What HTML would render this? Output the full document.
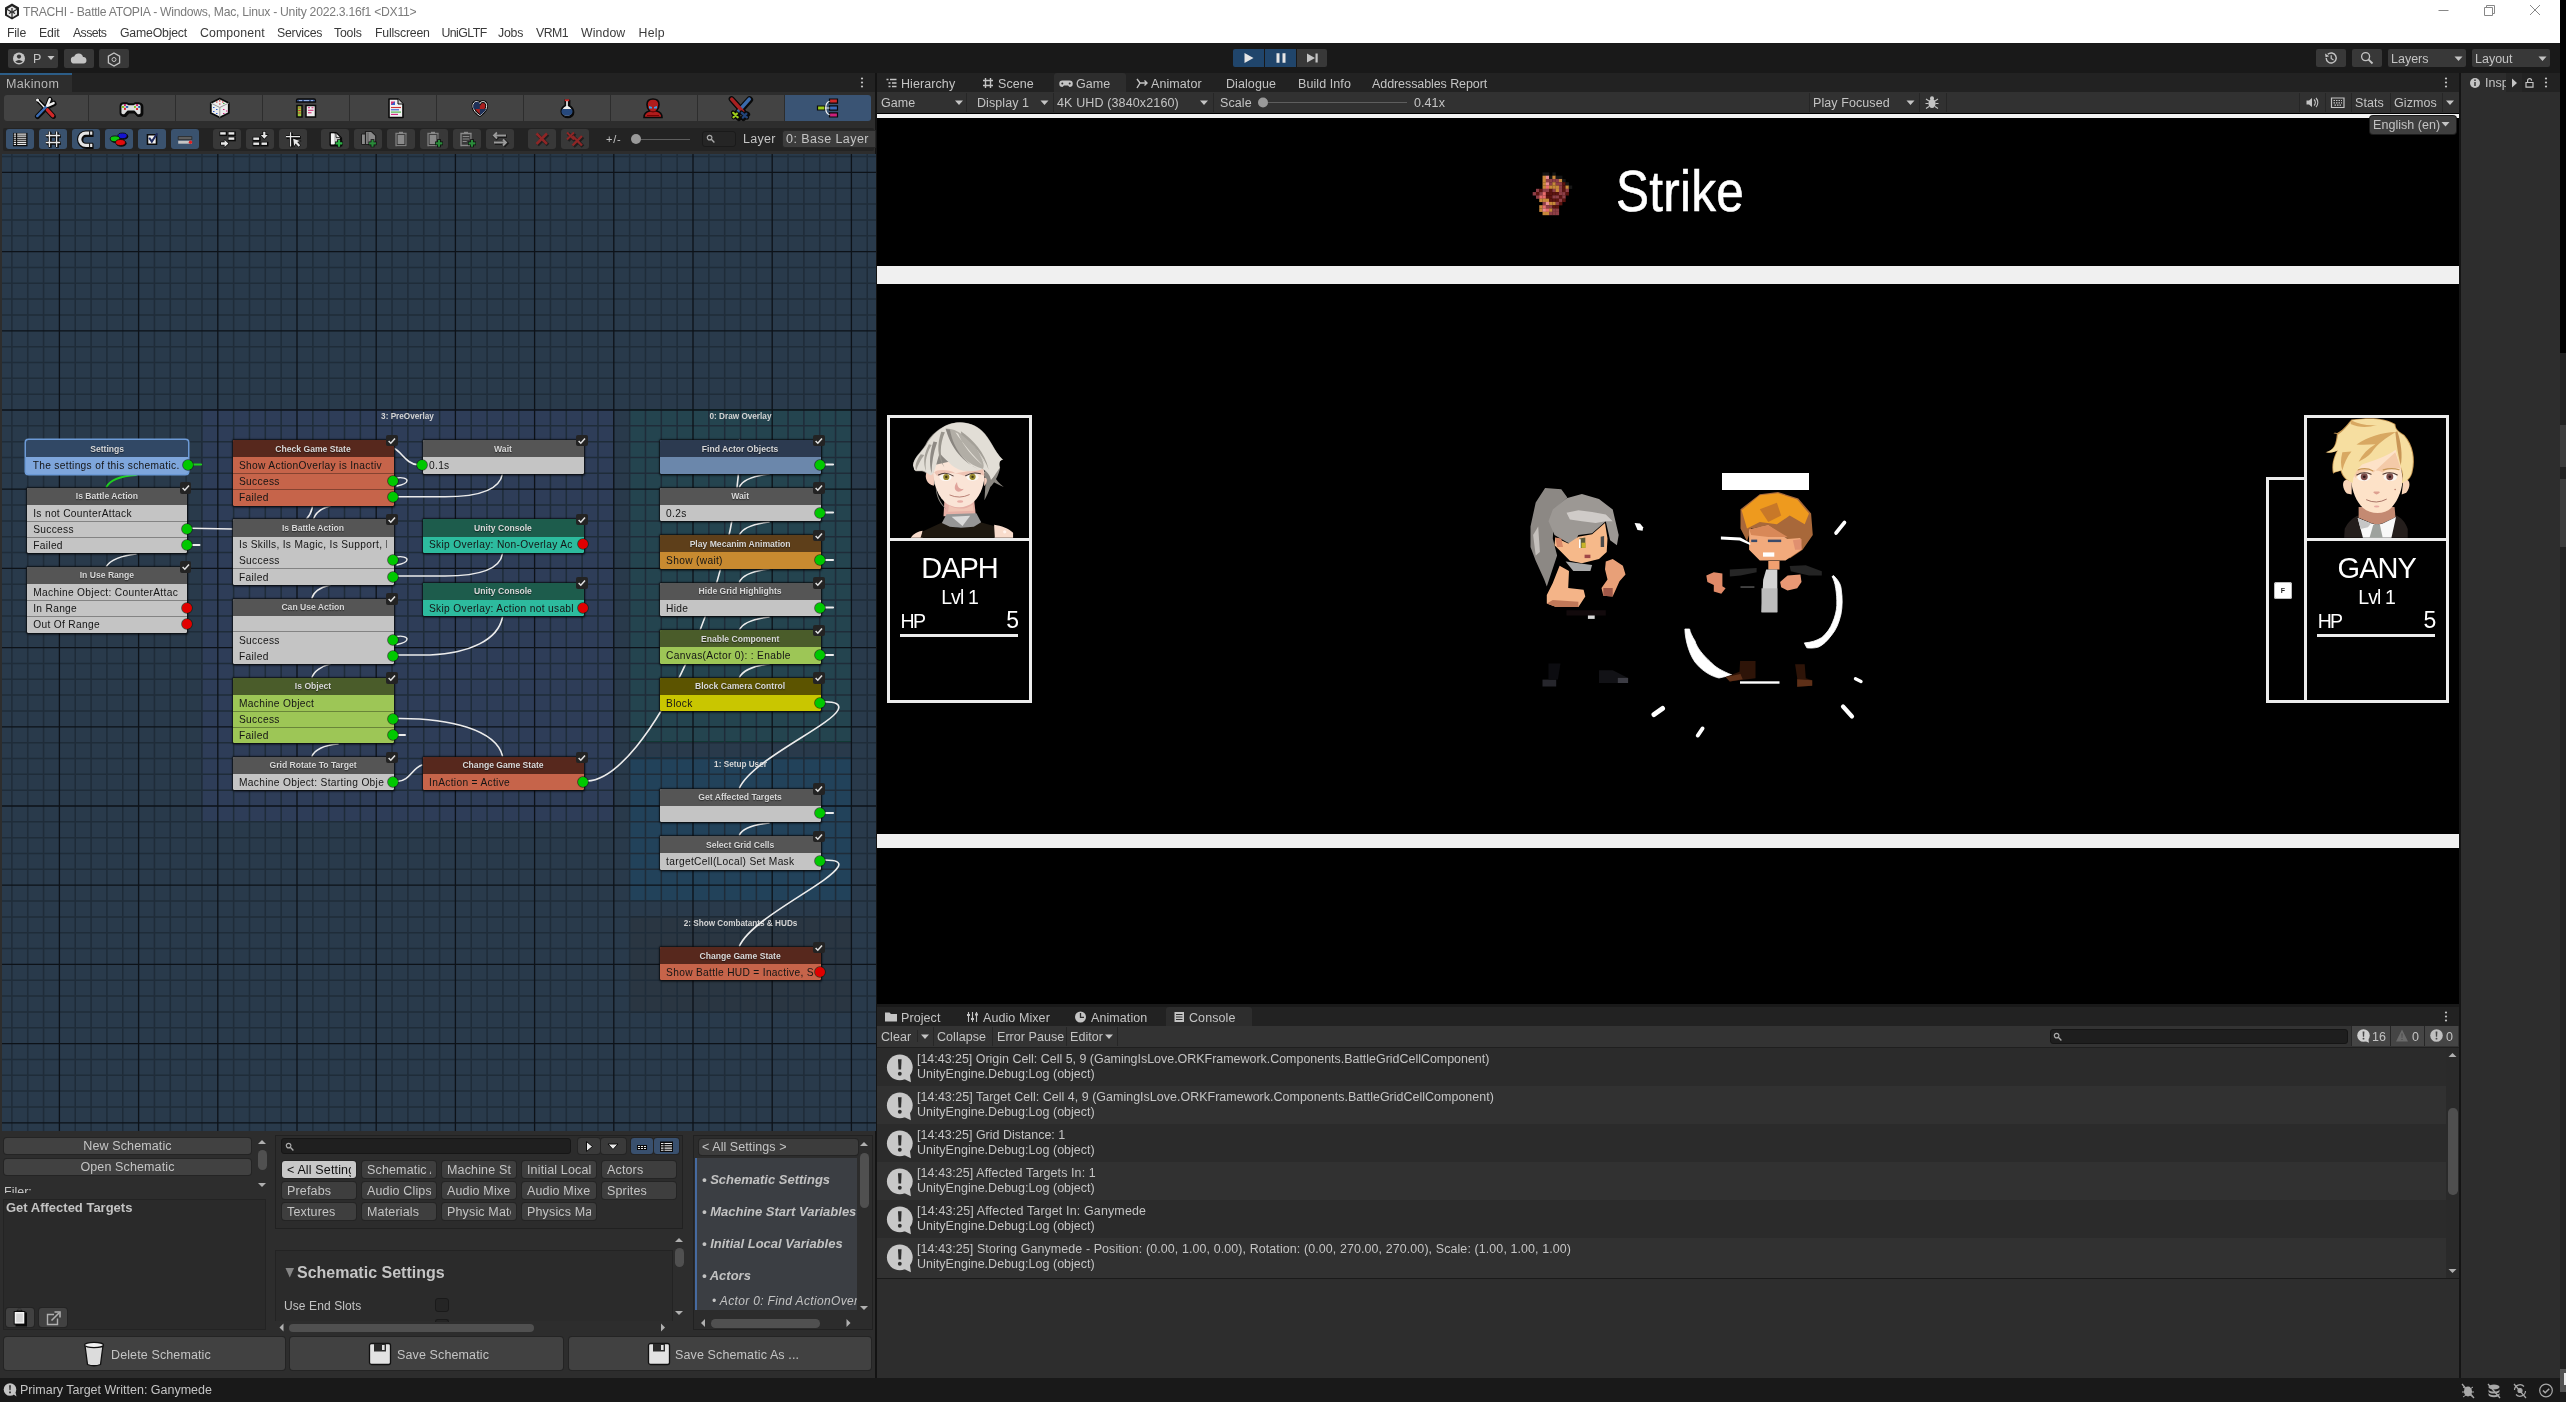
<!DOCTYPE html><html><head><meta charset="utf-8"><title>Unity</title><style>
*{box-sizing:border-box;margin:0;padding:0}
html,body{width:2566px;height:1402px;overflow:hidden;background:#1b1b1b}
body{font-family:"Liberation Sans",sans-serif;font-size:12.5px;color:#c4c4c4;position:relative}
.a{position:absolute}
.t{position:absolute;white-space:pre;line-height:1}
svg{position:absolute;overflow:visible}
.btn{position:absolute;background:#383838;border-radius:2px}
.sep{position:absolute;width:1px;background:#232323}
</style></head><body><div id="root" style="position:absolute;left:0;top:0;width:2566px;height:1402px;will-change:transform">
<div class="a" style="left:2560px;top:0px;width:6px;height:1402px;background:#000;"></div>
<div class="a" style="left:2560px;top:353px;width:6px;height:72px;background:#222;"></div>
<div class="a" style="left:2560px;top:425px;width:6px;height:42px;background:#3c3c3c;"></div>
<div class="a" style="left:2560px;top:467px;width:6px;height:12px;background:#222;"></div>
<div class="a" style="left:2560px;top:479px;width:6px;height:68px;background:#3c3c3c;"></div>
<div class="a" style="left:2560px;top:547px;width:6px;height:822px;background:#222;"></div>
<div class="a" style="left:2560px;top:1369px;width:6px;height:23px;background:#525252;"></div>
<div class="a" style="left:2563.5px;top:1373px;width:2.5px;height:12px;background:#e8e8e8;"></div>
<div class="a" style="left:2560px;top:1392px;width:6px;height:10px;background:#1b1b1b;"></div>
<div class="a" style="left:0px;top:0px;width:2560px;height:43px;background:#fff;"></div>
<svg style="left:4px;top:3px" width="16" height="17" viewBox="0 0 16 17"><path d="M8 0.5 L15 4.5 V12.5 L8 16.5 L1 12.5 V4.5 Z" fill="#222"/><path d="M8 3.2 L12.6 5.9 L8 8.6 L3.4 5.9 Z M3 7 L7.4 9.6 V14.2 L3 11.6 Z M13 7 L8.6 9.6 V14.2 L13 11.6 Z" fill="#e8e8e8"/><path d="M8 5 v3.5 M5 10.5 l2.4-1.3 M11 10.5 l-2.4-1.3" stroke="#222" stroke-width="1.2"/></svg>
<div class="t" style="left:23px;top:5.9px;font-size:12.2px;color:#7b7b7b;letter-spacing:-0.27px">TRACHI - Battle ATOPIA - Windows, Mac, Linux - Unity 2022.3.16f1 &lt;DX11&gt;</div>
<div class="t" style="left:7px;top:27.3px;font-size:12.3px;color:#3a3a3a;letter-spacing:-0.2px">File</div>
<div class="t" style="left:39px;top:27.3px;font-size:12.3px;color:#3a3a3a;letter-spacing:-0.2px">Edit</div>
<div class="t" style="left:73px;top:27.3px;font-size:12.3px;color:#3a3a3a;letter-spacing:-0.6px">Assets</div>
<div class="t" style="left:120px;top:27.3px;font-size:12.3px;color:#3a3a3a;letter-spacing:-0.2px">GameObject</div>
<div class="t" style="left:200px;top:27.3px;font-size:12.3px;color:#3a3a3a;letter-spacing:0.13px">Component</div>
<div class="t" style="left:277px;top:27.3px;font-size:12.3px;color:#3a3a3a;letter-spacing:-0.25px">Services</div>
<div class="t" style="left:334px;top:27.3px;font-size:12.3px;color:#3a3a3a;letter-spacing:-0.2px">Tools</div>
<div class="t" style="left:375px;top:27.3px;font-size:12.3px;color:#3a3a3a;letter-spacing:-0.2px">Fullscreen</div>
<div class="t" style="left:441.5px;top:27.3px;font-size:12.3px;color:#3a3a3a;letter-spacing:-0.55px">UniGLTF</div>
<div class="t" style="left:498px;top:27.3px;font-size:12.3px;color:#3a3a3a;letter-spacing:-0.2px">Jobs</div>
<div class="t" style="left:536px;top:27.3px;font-size:12.3px;color:#3a3a3a;letter-spacing:-0.5px">VRM1</div>
<div class="t" style="left:581px;top:27.3px;font-size:12.3px;color:#3a3a3a;letter-spacing:0.1px">Window</div>
<div class="t" style="left:638.5px;top:27.3px;font-size:12.3px;color:#3a3a3a;letter-spacing:0.3px">Help</div>
<svg style="left:2430px;top:0" width="130" height="22"><path d="M8.5 10.5h10" stroke="#888" stroke-width="1" fill="none"/><path d="M54.5 7.5h8v8h-8z M56.5 7.5v-2h8v8h-2" stroke="#888" stroke-width="1" fill="none"/><path d="M100 5l10 10M110 5l-10 10" stroke="#888" stroke-width="1" fill="none"/></svg>
<div class="a" style="left:0px;top:43px;width:2560px;height:30px;background:#191919;"></div>
<div class="a" style="left:8px;top:49px;width:50px;height:19px;background:#383838;border-radius:2px"></div>
<div class="a" style="left:64px;top:49px;width:30px;height:19px;background:#383838;border-radius:2px"></div>
<div class="a" style="left:99px;top:49px;width:30px;height:19px;background:#383838;border-radius:2px"></div>
<svg style="left:12px;top:51px" width="44" height="15"><circle cx="7" cy="7.5" r="6" fill="#c4c4c4"/><circle cx="7" cy="5.6" r="2.1" fill="#383838"/><path d="M3.2 10.6 Q7 7.2 10.8 10.6 Q7 13.6 3.2 10.6Z" fill="#383838"/><path d="M35.5 5 h7 l-3.5 4z" fill="#c4c4c4"/></svg>
<div class="t" style="left:33px;top:52.8px;font-size:12.5px;color:#c4c4c4;">P</div>
<svg style="left:70px;top:52px" width="18" height="12"><path d="M4.5 11.5 a3.5 3.5 0 0 1 -0.3 -7 a4.6 4.6 0 0 1 8.8 0.6 a3.2 3.2 0 0 1 0.5 6.4z" fill="#c4c4c4"/></svg>
<svg style="left:107px;top:51.5px" width="14" height="15"><path d="M7 1 L12.6 4.2 V10.8 L7 14 L1.4 10.8 V4.2 Z" fill="none" stroke="#c4c4c4" stroke-width="1.3"/><circle cx="7" cy="7.5" r="2" fill="none" stroke="#c4c4c4" stroke-width="1"/></svg>
<div class="a" style="left:1233px;top:49px;width:31px;height:18px;background:#20456b;border-radius:2px 0 0 2px"></div>
<div class="a" style="left:1265px;top:49px;width:31px;height:18px;background:#20456b;"></div>
<div class="a" style="left:1297px;top:49px;width:30px;height:18px;background:#383838;border-radius:0 2px 2px 0"></div>
<svg style="left:1233px;top:49px" width="94" height="18"><path d="M11.5 4 L20.5 9 L11.5 14Z" fill="#e6e6e6"/><path d="M43.5 4.2h3v9.6h-3z M49.5 4.2h3v9.6h-3z" fill="#e6e6e6"/><path d="M74 4.5 L82 9 L74 13.5Z M82.5 4.5h2.2v9h-2.2z" fill="#c4c4c4"/></svg>
<div class="a" style="left:2316px;top:49px;width:30px;height:18px;background:#383838;border-radius:2px"></div>
<div class="a" style="left:2352px;top:49px;width:30px;height:18px;background:#383838;border-radius:2px"></div>
<div class="a" style="left:2388px;top:49px;width:78px;height:18px;background:#383838;border-radius:2px"></div>
<div class="a" style="left:2472px;top:49px;width:78px;height:18px;background:#383838;border-radius:2px"></div>
<svg style="left:2324px;top:51px" width="14" height="14"><path d="M2.2 7 a5 5 0 1 0 1.6 -3.7" fill="none" stroke="#c4c4c4" stroke-width="1.4"/><path d="M1 2.5 l0.6 3.8 l3.6 -1z" fill="#c4c4c4"/><path d="M7.2 4.2 v3.3 l2.3 1.4" fill="none" stroke="#c4c4c4" stroke-width="1.2"/></svg>
<svg style="left:2360px;top:51px" width="14" height="14"><circle cx="5.6" cy="5.6" r="4" fill="none" stroke="#c4c4c4" stroke-width="1.3"/><path d="M8.6 8.6 L12.5 12.5" stroke="#c4c4c4" stroke-width="1.8"/></svg>
<div class="t" style="left:2391px;top:52.8px;font-size:12.5px;color:#c4c4c4;">Layers</div>
<div class="t" style="left:2475px;top:52.8px;font-size:12.5px;color:#c4c4c4;">Layout</div>
<svg style="left:2454px;top:56px" width="96" height="6"><path d="M0.5 0.5h8l-4 4.5z M84.5 0.5h8l-4 4.5z" fill="#c4c4c4"/></svg>
<div class="a" style="left:0px;top:73px;width:876px;height:1305px;background:#2d2d2d;"></div>
<div class="a" style="left:0px;top:73px;width:876px;height:19px;background:#222;"></div>
<div class="a" style="left:0px;top:73px;width:72px;height:19px;background:#2d2d2d;"></div>
<div class="a" style="left:0px;top:73px;width:72px;height:2px;background:#2c5d87;"></div>
<div class="t" style="left:6px;top:77.8px;font-size:12.5px;color:#b8b8b8;letter-spacing:0.35px">Makinom</div>
<svg style="left:860px;top:77px" width="4" height="12"><circle cx="2" cy="1.5" r="1.1" fill="#c4c4c4"/><circle cx="2" cy="5.5" r="1.1" fill="#c4c4c4"/><circle cx="2" cy="9.5" r="1.1" fill="#c4c4c4"/></svg>
<div class="a" style="left:875px;top:73px;width:2px;height:1305px;background:#131313;"></div>
<div class="a" style="left:877px;top:73px;width:1582px;height:19px;background:#222;"></div>
<div class="a" style="left:1054px;top:73px;width:72px;height:19px;background:#2d2d2d;border-radius:3px 3px 0 0"></div>
<div class="a" style="left:877px;top:92px;width:1582px;height:21px;background:#313131;"></div>
<div class="a" style="left:2459px;top:73px;width:2px;height:1305px;background:#141414;"></div>
<div class="a" style="left:2461px;top:73px;width:99px;height:1305px;background:#2d2d2d;"></div>
<div class="a" style="left:2461px;top:73px;width:99px;height:19px;background:#2d2d2d;border-radius:3px 3px 0 0"></div>
<div class="a" style="left:2506px;top:73px;width:54px;height:19px;background:#262626;"></div>
<div class="a" style="left:2522px;top:73px;width:38px;height:19px;background:#222;"></div>
<svg style="left:2468px;top:76px" width="90" height="14"><circle cx="7" cy="7" r="5" fill="#c4c4c4"/><path d="M6.3 6h1.4v4h-1.4z M6.3 3.6h1.4v1.4h-1.4z" fill="#2d2d2d"/><path d="M44 2.5l5 4.5l-5 4.5z" fill="#c4c4c4"/><path d="M58 6.5h7v4.6h-7z" fill="none" stroke="#c4c4c4" stroke-width="1.2"/><path d="M59.6 6.3v-1.6a2 2 0 0 1 4 0" fill="none" stroke="#c4c4c4" stroke-width="1.2"/><circle cx="78" cy="2.5" r="1.1" fill="#c4c4c4"/><circle cx="78" cy="6.5" r="1.1" fill="#c4c4c4"/><circle cx="78" cy="10.5" r="1.1" fill="#c4c4c4"/></svg>
<div class="t" style="left:2485px;top:77px;font-size:12.5px;color:#c4c4c4;width:21px;overflow:hidden">Insp</div>
<div class="a" style="left:0px;top:1378px;width:2560px;height:24px;background:#191919;"></div>
<svg style="left:2px;top:1382px" width="16" height="16"><circle cx="8" cy="7.5" r="6.3" fill="#c4c4c4"/><path d="M11 12 l3.5 2.5 l-1 -4z" fill="#c4c4c4"/><path d="M7.2 3.3h1.6l-0.3 5h-1z M7.2 9.6h1.6v1.6h-1.6z" fill="#191919"/></svg>
<div class="t" style="left:20px;top:1384.2px;font-size:12.5px;color:#c4c4c4;">Primary Target Written: Ganymede</div>
<svg style="left:2456px;top:1381px" width="104" height="18"><g fill="#a8a8a8" stroke="none"><ellipse cx="12" cy="10.5" rx="4" ry="5"/><path d="M7 6l3 2M17 6l-3 2M6 11h3M18 11h-3M7 16l3-2M17 16l-3-2" stroke="#a8a8a8" stroke-width="1"/><path d="M6 3l12 14" stroke="#a8a8a8" stroke-width="1.3"/></g><g fill="#a8a8a8"><ellipse cx="38" cy="6" rx="5.5" ry="2.4"/><path d="M32.5 8.2a5.5 2.4 0 0 0 11 0v2a5.5 2.4 0 0 1-11 0z M32.5 11.8a5.5 2.4 0 0 0 11 0v2a5.5 2.4 0 0 1-11 0z"/><path d="M32 3l12 14" stroke="#a8a8a8" stroke-width="1.3"/></g><g fill="none" stroke="#a8a8a8" stroke-width="1.2"><path d="M58.5 9a5.5 5.5 0 0 1 9.5-3.5M69.5 10a5.5 5.5 0 0 1-9.5 3.5"/><circle cx="64" cy="9.5" r="2" fill="#a8a8a8"/><path d="M58 3l12 14"/></g><g fill="none" stroke="#a8a8a8" stroke-width="1.2"><circle cx="90" cy="9.5" r="6.3"/><path d="M87 9.5l2.2 2.2l4-4" stroke-width="1.6"/></g></svg>
<div class="a" style="left:4px;top:95px;width:84px;height:26px;background:#434343;border-radius:3px 0 0 3px"></div>
<div class="a" style="left:89px;top:95px;width:86px;height:26px;background:#434343;"></div>
<div class="a" style="left:176px;top:95px;width:86px;height:26px;background:#434343;"></div>
<div class="a" style="left:263px;top:95px;width:86px;height:26px;background:#434343;"></div>
<div class="a" style="left:350px;top:95px;width:86px;height:26px;background:#434343;"></div>
<div class="a" style="left:437px;top:95px;width:86px;height:26px;background:#434343;"></div>
<div class="a" style="left:524px;top:95px;width:86px;height:26px;background:#434343;"></div>
<div class="a" style="left:611px;top:95px;width:86px;height:26px;background:#434343;"></div>
<div class="a" style="left:698px;top:95px;width:86px;height:26px;background:#434343;"></div>
<div class="a" style="left:785px;top:95px;width:86px;height:26px;background:#3a5474;border-radius:0 3px 3px 0"></div>
<div class="a" style="left:3px;top:128px;width:871px;height:23px;background:#232323;border-radius:2px"></div>
<div class="a" style="left:6px;top:129px;width:28px;height:20px;background:#3a526e;border-radius:3px"></div>
<div class="a" style="left:39px;top:129px;width:28px;height:20px;background:#3a526e;border-radius:3px"></div>
<div class="a" style="left:72px;top:129px;width:28px;height:20px;background:#3a526e;border-radius:3px"></div>
<div class="a" style="left:105px;top:129px;width:28px;height:20px;background:#3a526e;border-radius:3px"></div>
<div class="a" style="left:138px;top:129px;width:28px;height:20px;background:#3a526e;border-radius:3px"></div>
<div class="a" style="left:171px;top:129px;width:28px;height:20px;background:#3a526e;border-radius:3px"></div>
<div class="a" style="left:213px;top:129px;width:28px;height:20px;background:#383838;border-radius:3px"></div>
<div class="a" style="left:246px;top:129px;width:28px;height:20px;background:#383838;border-radius:3px"></div>
<div class="a" style="left:279px;top:129px;width:28px;height:20px;background:#383838;border-radius:3px"></div>
<div class="a" style="left:321px;top:129px;width:28px;height:20px;background:#383838;border-radius:3px"></div>
<div class="a" style="left:354px;top:129px;width:28px;height:20px;background:#383838;border-radius:3px"></div>
<div class="a" style="left:387px;top:129px;width:28px;height:20px;background:#383838;border-radius:3px"></div>
<div class="a" style="left:420px;top:129px;width:28px;height:20px;background:#383838;border-radius:3px"></div>
<div class="a" style="left:453px;top:129px;width:28px;height:20px;background:#383838;border-radius:3px"></div>
<div class="a" style="left:486px;top:129px;width:28px;height:20px;background:#383838;border-radius:3px"></div>
<div class="a" style="left:528px;top:129px;width:28px;height:20px;background:#383838;border-radius:3px"></div>
<div class="a" style="left:561px;top:129px;width:28px;height:20px;background:#383838;border-radius:3px"></div>
<svg style="left:0;top:0" width="1" height="1"><g stroke-linecap="round" stroke-linejoin="round"><g transform="translate(0.9,0.9)"><path d="M37.500 100 L53 116M36.800 116.300 L47.500 105.500L49.800 99M48.500 105.500L53.800 103" stroke="#0a0a0a" stroke-width="4" fill="none"/></g><path d="M37.500 100 L44 107" stroke="#0a0a0a" stroke-width="3.600"/><path d="M47.300 109.700 L52.800 115.800" stroke="#0a0a0a" stroke-width="5.400"/><path d="M37 116.300 L47.500 105.500" stroke="#0a0a0a" stroke-width="4.400"/><path d="M47.500 105.300L49.800 99M48.500 105.300L53.800 103" stroke="#0a0a0a" stroke-width="4.600" fill="none"/><path d="M37.600 100.100 L44.500 107.500" stroke="#f4f4f4" stroke-width="1.300"/><circle cx="37.500" cy="100" r="1.500" fill="#f4f4f4"/><path d="M47.400 109.800 L52.700 115.700" stroke="#d02828" stroke-width="3.400"/><path d="M37.200 116.100 L47 106" stroke="#3a6cb4" stroke-width="2.400"/><path d="M47.200 105.800L49.800 99.200M48 105.600L53.600 103.100" stroke="#f0f0f0" stroke-width="2.400" fill="none"/></g><path d="M123.500 103.200h3.500l1.500 1h5l1.500-1h3.500a3 3 0 0 1 3 3v6.500a2.400 2.400 0 0 1-2.400 2.400h-1.800l-3.300-3.600h-6l-3.300 3.600h-1.800a2.400 2.400 0 0 1-2.400-2.400v-6.500a3 3 0 0 1 3-3z" transform="translate(0.9,0.9)" fill="#0a0a0a" stroke="#0a0a0a" stroke-width="2"/><path d="M123.500 103.200h3.500l1.500 1h5l1.500-1h3.500a3 3 0 0 1 3 3v6.500a2.400 2.400 0 0 1-2.400 2.400h-1.800l-3.300-3.600h-6l-3.300 3.600h-1.800a2.400 2.400 0 0 1-2.400-2.400v-6.500a3 3 0 0 1 3-3z" fill="#dedede" stroke="#0a0a0a" stroke-width="1.900" stroke-linejoin="round"/><rect x="124" y="104.100" width="1.900" height="1.900" fill="#c8206a"/><rect x="121.900" y="106" width="2.400" height="1.900" fill="#80c020"/><rect x="125.800" y="106" width="2.400" height="1.900" fill="#2860b0"/><rect x="124" y="107.900" width="1.900" height="2" fill="#d82020"/><rect x="136.100" y="104.100" width="1.900" height="1.900" fill="#c8206a"/><rect x="134" y="106" width="1.900" height="1.900" fill="#80c020"/><rect x="138.200" y="106" width="1.900" height="1.900" fill="#2860b0"/><rect x="136.100" y="108.100" width="1.900" height="1.900" fill="#d82020"/><path d="M219.800 98.500l9 4.500v10l-9 4.500l-9-4.500v-10z" fill="#ececec" stroke="#0a0a0a" stroke-width="1.800" stroke-linejoin="round"/><path d="M210.800 103l9 4.500l9-4.500M219.800 107.500v10" stroke="#9a9a9a" stroke-width="1" fill="none"/><path d="M216 102h1.500M219 100.800h1.500M222 102h1.500M219 104h1.500" stroke="#d03030" stroke-width="1.200"/><path d="M223 103.500h1.500" stroke="#40b040" stroke-width="1.200"/><path d="M213 107.500h1.500M216 109.500h1.500M213 111.500h1.500M216 113.500h1.500" stroke="#3060d0" stroke-width="1.200"/><path d="M223 109.500h1.500M226 111h1.500M223 113.500h1.500" stroke="#d02080" stroke-width="1.200"/><path d="M298 99h16a1.500 1.500 0 0 1 1.500 1.500v1.500h-19v-1.500a1.500 1.500 0 0 1 1.500-1.500z" fill="#3a5a9a" stroke="#0a0a0a" stroke-width="1.300"/><path d="M299 100.600h3M304 100.600h5M311 100.600h2" stroke="#9ab8e8" stroke-width="1"/><path d="M297 105.500h5v11.500h-5z" fill="#98c840" stroke="#0a0a0a" stroke-width="1.500"/><path d="M298.300 108h2.400M298.300 110.500h2.400M298.300 113h2.400" stroke="#d03030" stroke-width="1.100"/><path d="M306 105.500h9.500v11.500h-9.500z" fill="#ececec" stroke="#0a0a0a" stroke-width="1.500"/><path d="M308 107.800h2M311.500 107.800h2M308 110.300h5.500M308 112.800h3.500" stroke="#d02070" stroke-width="1.100"/><path d="M389 99h9l5 5v13.500h-14z" fill="#f0f0f0" stroke="#0a0a0a" stroke-width="1.600" stroke-linejoin="round"/><path d="M398 99v5h5" fill="#c8c8c8" stroke="#0a0a0a" stroke-width="1"/><path d="M391 101.500h4v3.500h-4z" fill="#d03070"/><path d="M391 105l4-3.500v3.500z" fill="#3060d0"/><path d="M391 107.500h10" stroke="#d03030" stroke-width="1.100"/><path d="M391 109.800h8" stroke="#3060d0" stroke-width="1.100"/><path d="M391 112.100h10" stroke="#40b040" stroke-width="1.100"/><path d="M391 114.400h7" stroke="#d02080" stroke-width="1.100"/><g transform="translate(0,1.6)"><path d="M479.800 114c-10-6.500-7.500-14.800-2.500-14c1.500 0.300 2.500 1.500 2.500 2.500c0-1 1-2.200 2.500-2.500c5-0.800 7.500 7.500-2.500 14z" fill="#a82020" stroke="#0a0a0a" stroke-width="2.800" stroke-linejoin="round"/><path d="M479.800 114c-10-6.500-7.500-14.800-2.500-14c1.500 0.300 2.500 1.500 2.500 2.500c0-1 1-2.200 2.500-2.500c5-0.800 7.500 7.500-2.500 14z" fill="none" stroke="#f0f0f0" stroke-width="1"/><path d="M479.800 102.500v5h-6.300c-0.800-3.800 0.800-7.800 3.800-7.400c1.500 0.300 2.500 1.400 2.500 2.400z" fill="#1e3058"/><path d="M479.800 107.500h6.300c-1 2.300-3 4.300-6.300 6.300z" fill="#1e3058"/></g><path d="M565.300 100h3.400v5.500c2.600 1.300 4 3.600 4 6c0 3.200-2.600 5-5.700 5s-5.700-1.800-5.700-5c0-2.400 1.400-4.700 4-6z" transform="translate(0.8,0.8)" fill="#0a0a0a" stroke="#0a0a0a" stroke-width="1.800"/><path d="M565.300 100h3.400v5.500c2.600 1.300 4 3.600 4 6c0 3.200-2.600 5-5.700 5s-5.700-1.800-5.700-5c0-2.400 1.400-4.700 4-6z" fill="#ececec" stroke="#0a0a0a" stroke-width="1.700"/><path d="M562.500 109h9c0.800 0.800 1 1.700 1 2.500c0 2.800-2.400 4.200-5.500 4.200s-5.500-1.400-5.500-4.200c0-0.800 0.200-1.700 1-2.500z" fill="#26487c"/><path d="M564.800 99.300h4.400v1.900h-4.400z" fill="#d03030"/><path d="M644 117.500c0-4 3-6 5.500-6.500c-2-2-2.500-4.500-2.500-6.500c0-3.500 2.500-5.500 6-5.500s6 2 6 5.500c0 2-0.500 4.500-2.500 6.500c2.500 0.500 5.500 2.500 5.500 6.500z" fill="#b01c1c" stroke="#0a0a0a" stroke-width="1.600"/><path d="M649 106l3 1v1.500h-3z M657 106l-3 1v1.500h3z" fill="#3aa0e8"/><path d="M650.500 111c1.500 1.200 3.500 1.200 5 0" stroke="#500" stroke-width="1" fill="none"/><path d="M647 115.500h12" stroke="#700" stroke-width="1"/><g stroke-linecap="round"><g transform="translate(0.9,0.9)"><path d="M731.500 99l13 14.500M749.500 99l-13 14.500M733.500 113l4.500 4.500M746.500 113.500l-4 4" stroke="#0a0a0a" stroke-width="5.500"/></g><path d="M731.500 99l12.500 14" stroke="#0a0a0a" stroke-width="5.800"/><path d="M749.500 99l-12.500 14" stroke="#0a0a0a" stroke-width="5.800"/><path d="M749.300 99.200l-11 12.300" stroke="#3a6aac" stroke-width="3.500"/><path d="M731.700 99.200l11 12.300" stroke="#a82020" stroke-width="3.500"/><path d="M733 112.500l5 5M733.500 117.300l3.500-3.800" stroke="#0a0a0a" stroke-width="4.200"/><path d="M741.500 112.500l5.500 5M746.500 113.500l-3.500 4" stroke="#0a0a0a" stroke-width="4.200"/><path d="M733.200 112.800l4.500 4.500M733.500 117.300l3.400-3.700" stroke="#9ccc1c" stroke-width="2.200"/><path d="M741.800 112.800l5 4.500M746.300 113.800l-3.300 3.700" stroke="#22447a" stroke-width="2.400"/></g><path d="M817.500 106h7.500v4h-7.500z" fill="#9ccc1c" stroke="#0a0a0a" stroke-width="1.200"/><path d="M829.500 99h8v4.200h-8z" fill="#d02828" stroke="#0a0a0a" stroke-width="1.200"/><path d="M829.500 105.900h8v4.200h-8z" fill="#3a6ab8" stroke="#0a0a0a" stroke-width="1.200"/><path d="M829.500 112.800h8v4.200h-8z" fill="#cc207c" stroke="#0a0a0a" stroke-width="1.200"/><path d="M825 108h4.500M829.500 101.200c-2.800 1-3.800 4-3.800 6.800s1 5.800 3.800 6.800" stroke="#f0f0f0" stroke-width="1.200" fill="none"/><rect x="13" y="132.900" width="14.500" height="13.400" fill="#0a0a0a"/><path d="M13.8 134.10h2.2M17.2 134.10h9M13.8 136.15h2.2M17.2 136.15h9M13.8 138.20h2.2M17.2 138.20h9M13.8 140.25h2.2M17.2 140.25h9M13.8 142.30h2.2M17.2 142.30h9M13.8 144.35h2.2M17.2 144.35h9" stroke="#e8e8e8" stroke-width="1.150"/><path d="M49.400 131.600v15.400M56.600 131.600v15.400M45.800 135.500h14.400M45.800 142.500h14.400" transform="translate(0.8,0.8)" stroke="#0a0a0a" stroke-width="2.9000000000000004" fill="none" stroke-linejoin="round"/><path d="M49.400 131.600v15.400M56.600 131.600v15.400M45.800 135.500h14.400M45.800 142.500h14.400" stroke="#0a0a0a" stroke-width="2.9000000000000004" fill="none" stroke-linejoin="round"/><path d="M49.400 131.600v15.400M56.600 131.600v15.400M45.800 135.500h14.400M45.800 142.500h14.400" stroke="#e8e8e8" stroke-width="1.3" fill="none" stroke-linejoin="round"/><path d="M92.800 133.200h-7a6.100 6.100 0 0 0 0 12.200h7" transform="translate(0.8,0.9)" stroke="#0a0a0a" stroke-width="5.600" fill="none"/><path d="M93 133.200h-7.200a6.100 6.100 0 0 0 0 12.200h7.200" stroke="#0a0a0a" stroke-width="5.400" fill="none"/><path d="M92.300 133.200h-6.500a6.100 6.100 0 0 0 0 12.200h6.500" stroke="#e4e4e4" stroke-width="3.300" fill="none"/><path d="M89.600 131.200v4M89.600 143.400v4" stroke="#0a0a0a" stroke-width="1"/><g transform="translate(0.8,0.8)" fill="#0a0a0a"><ellipse cx="122.5" cy="135.800" rx="5" ry="3.200"/><ellipse cx="115" cy="138.800" rx="5.200" ry="3.300"/><ellipse cx="120.5" cy="142.500" rx="5.300" ry="3.400"/></g><ellipse cx="122.5" cy="135.800" rx="4.600" ry="2.800" fill="#1414d0" stroke="#0a0a0a" stroke-width="0.800"/><ellipse cx="115" cy="138.800" rx="4.800" ry="2.900" fill="#0cc80c" stroke="#0a0a0a" stroke-width="0.800"/><ellipse cx="120.5" cy="142.500" rx="4.900" ry="3" fill="#e00c0c" stroke="#0a0a0a" stroke-width="0.800"/><path d="M147.5 134.800h9v9.500h-9z" fill="#f0f0f0" stroke="#0a0a0a" stroke-width="1.600"/><path d="M149.2 137.800l2.600 3.800l5.500-8.300" stroke="#1e2a5e" stroke-width="2" fill="none"/><path d="M178.2 136.500h13.600v3.200h-13.600z" fill="#5e5e5e" stroke="#2a2a2a" stroke-width="0.800"/><path d="M178.2 140.700h13.600v3h-13.600z" fill="#c4c4c4"/><circle cx="190.5" cy="142.200" r="1.700" fill="#e02020"/><rect x="219.50" y="131.50" width="7.70" height="4.60" fill="#0a0a0a"/><rect x="220.20" y="132.20" width="5.50" height="2.40" fill="#e8e8e8"/><rect x="227.80" y="131.50" width="8.00" height="4.60" fill="#0a0a0a"/><rect x="228.50" y="132.20" width="5.80" height="2.40" fill="#e8e8e8"/><rect x="227.80" y="136.70" width="8.00" height="4.60" fill="#0a0a0a"/><rect x="228.50" y="137.40" width="5.80" height="2.40" fill="#e8e8e8"/><path d="M221 142.300h3.600v-2.200l3.800 3.400l-3.800 3.400v-2.200h-3.600z" fill="#e8e8e8" stroke="#0a0a0a" stroke-width="1.400" stroke-linejoin="round" paint-order="stroke"/><rect x="252.60" y="136.80" width="8.00" height="4.60" fill="#0a0a0a"/><rect x="253.30" y="137.50" width="5.80" height="2.40" fill="#e8e8e8"/><rect x="252.60" y="141.80" width="8.00" height="4.60" fill="#0a0a0a"/><rect x="253.30" y="142.50" width="5.80" height="2.40" fill="#e8e8e8"/><rect x="260.80" y="141.80" width="7.70" height="4.60" fill="#0a0a0a"/><rect x="261.50" y="142.50" width="5.50" height="2.40" fill="#e8e8e8"/><path d="M263.200 131.800h2.200v3.200h2.400l-3.500 3.700l-3.500-3.700h2.400z" fill="#e8e8e8" stroke="#0a0a0a" stroke-width="1.400" stroke-linejoin="round" paint-order="stroke"/><path d="M290.500 132.200v14.300M286 136.700h14" transform="translate(0.8,0.8)" stroke="#0a0a0a" stroke-width="2.9000000000000004" fill="none" stroke-linejoin="round"/><path d="M290.500 132.200v14.300M286 136.700h14" stroke="#0a0a0a" stroke-width="2.9000000000000004" fill="none" stroke-linejoin="round"/><path d="M290.500 132.200v14.300M286 136.700h14" stroke="#e8e8e8" stroke-width="1.3" fill="none" stroke-linejoin="round"/><path d="M293.200 138.700l6.800 2.300l-2.800 1l3 3.300l-1.600 1.400l-3-3.300l-1.400 2.600z" fill="#e8e8e8" stroke="#0a0a0a" stroke-width="1.200" paint-order="stroke"/><path d="M330.200 132.800h5.800l4.600 4.600v7.600h-10.400z" transform="translate(0.8,0.8)" fill="#0a0a0a" stroke="#0a0a0a" stroke-width="1.500"/><path d="M330.200 132.800h5.800l4.600 4.600v7.600h-10.400z" fill="#c8c8c8" stroke="#0a0a0a" stroke-width="1.500" stroke-linejoin="round"/><path d="M330.900 133.500h3.200v10.800h-3.200z" fill="#f4f4f4"/><path d="M336 132.800v4.600h4.600z" fill="#e8e8e8" stroke="#0a0a0a" stroke-width="0.800"/><path d="M335 143.3h8M339 139.3v8" stroke="#0a0a0a" stroke-width="3.800"/><path d="M335.6 143.3h6.800M339 139.9v6.800" stroke="#2cb044" stroke-width="2.200"/><path d="M361.500 134h4.500v10.500h-4.500z" fill="#8a8a8a" stroke="#1e1e1e" stroke-width="1"/><path d="M365.500 131.500h6l4.200 4.200v8.800h-10.200z" fill="#8a8a8a" stroke="#1e1e1e" stroke-width="1.200"/><path d="M367 132.500h2v11h-2z" fill="#707070"/><path d="M368.5 143.3h8M372.5 139.3v8" stroke="#0a0a0a" stroke-width="3.800"/><path d="M369.1 143.3h6.800M372.5 139.9v6.800" stroke="#2a8a3a" stroke-width="2.200"/><path d="M396 133.500h10v12h-10z" transform="translate(1,1)" fill="#1e1e1e"/><path d="M396 133.500h10v12h-10z" fill="none" stroke="#7e7e7e" stroke-width="1.300"/><path d="M397.5 135h7v9h-7z" fill="#8a8a8a"/><path d="M399 131.800h4v2h-4z" fill="#8a8a8a"/><path d="M428 133.500h10v12h-10z" transform="translate(1,1)" fill="#1e1e1e"/><path d="M428 133.500h10v12h-10z" fill="none" stroke="#7e7e7e" stroke-width="1.300"/><path d="M429.5 135h7v9h-7z" fill="#8a8a8a"/><path d="M431 131.800h4v2h-4z" fill="#8a8a8a"/><path d="M435 143.3h8M439 139.3v8" stroke="#0a0a0a" stroke-width="3.800"/><path d="M435.6 143.3h6.800M439 139.9v6.800" stroke="#2a8a3a" stroke-width="2.200"/><path d="M461 133.500h10v12h-10z" transform="translate(1,1)" fill="#1e1e1e"/><path d="M461 133.500h10v12h-10z" fill="#3a3a3a" stroke="#8a8a8a" stroke-width="1.300"/><path d="M464 131.800h4v2h-4z" fill="#8a8a8a"/><path d="M462.7 136.500h6.600M462.7 139h6.600M462.7 141.500h4" stroke="#8a8a8a" stroke-width="1.100"/><path d="M468 143.3h8M472 139.3v8" stroke="#0a0a0a" stroke-width="3.800"/><path d="M468.6 143.3h6.800M472 139.9v6.800" stroke="#2a8a3a" stroke-width="2.200"/><g transform="translate(0.8,0.8)"><path d="M506 135.500h-11M497 132.500l-3 3l3 3M494 142.500h11M503 139.500l3 3l-3 3" stroke="#1a1a1a" stroke-width="3.500" fill="none"/></g><path d="M506 135.500h-11M497 132.500l-3 3l3 3" stroke="#9a9a9a" stroke-width="1.900" fill="none"/><path d="M494 142.500h11M503 139.500l3 3l-3 3" stroke="#9a9a9a" stroke-width="1.900" fill="none"/><path d="M537.5 134.500l10.500 10.500M548 134.500l-10.500 10.500" stroke="#1e1e1e" stroke-width="3.600"/><path d="M536.5 133.500l10.500 10.500M547 133.500l-10.500 10.500" stroke="#8e2626" stroke-width="2.500"/><path d="M568 133.500l7 7M575 133.500l-7 7M573.5 137l9.500 9.500M583 137l-9.500 9.500" stroke="#1e1e1e" stroke-width="3.600"/><path d="M567 132.500l7 7M574 132.500l-7 7" stroke="#8e2626" stroke-width="1.900"/><path d="M572.5 136l9.500 9.500M582 136l-9.500 9.500" stroke="#8e2626" stroke-width="2.400"/></svg>
<div class="t" style="left:606px;top:133.9px;font-size:11px;color:#c4c4c4;letter-spacing:0.8px">+/-</div>
<div class="a" style="left:638px;top:138.5px;width:52px;height:1px;background:#5e5e5e;"></div>
<div class="a" style="left:631px;top:134px;width:10px;height:10px;border-radius:5px;background:#999"></div>
<div class="a" style="left:702px;top:131px;width:34px;height:16px;background:#252525;border-radius:3px;border:1px solid #1a1a1a"></div>
<svg style="left:706px;top:134px" width="10" height="10"><circle cx="3.6" cy="3.6" r="2.3" fill="none" stroke="#aaa" stroke-width="1.2"/><path d="M5.3 5.3L8.4 8.4" stroke="#aaa" stroke-width="1.4"/></svg>
<div class="t" style="left:743px;top:133.2px;font-size:12.5px;color:#c4c4c4;letter-spacing:0.3px">Layer</div>
<div class="a" style="left:782px;top:130px;width:94px;height:18px;background:#3c3c3c;border-radius:3px 0 0 3px;border:1px solid #262626"></div>
<div class="t" style="left:786px;top:133.2px;font-size:12.5px;color:#c4c4c4;letter-spacing:0.45px">0: Base Layer</div>
<div class="a" id="graph" style="left:2px;top:154px;width:874px;height:977px;background:#293a4b;overflow:hidden">
<div class="a" style="left:199px;top:254.8px;width:413px;height:413.7px;background:#2e3d58;border:1px solid #252a40"></div>
<div class="a" style="left:627px;top:254.8px;width:223px;height:333.7px;background:#24444f;border:1px solid #123a36"></div>
<div class="a" style="left:627px;top:603px;width:223px;height:144px;background:#22425a;border:1px solid #15364a"></div>
<div class="a" style="left:627px;top:762px;width:223px;height:97px;background:#2a3642;border:1px solid #1c242c"></div>
<svg width="874" height="977" style="left:0;top:0"><path d="M9.88 0V977M25.72 0V977M41.56 0V977M73.24 0V977M89.08 0V977M104.92 0V977M120.76 0V977M152.44 0V977M168.28 0V977M184.12 0V977M199.96 0V977M231.64 0V977M247.48 0V977M263.32 0V977M279.16 0V977M310.84 0V977M326.68 0V977M342.52 0V977M358.36 0V977M390.04 0V977M405.88 0V977M421.72 0V977M437.56 0V977M469.24 0V977M485.08 0V977M500.92 0V977M516.76 0V977M548.44 0V977M564.28 0V977M580.12 0V977M595.96 0V977M627.64 0V977M643.48 0V977M659.32 0V977M675.16 0V977M706.84 0V977M722.68 0V977M738.52 0V977M754.36 0V977M786.04 0V977M801.88 0V977M817.72 0V977M833.56 0V977M865.24 0V977M0 2.56H874M0 34.24H874M0 50.08H874M0 65.92H874M0 81.76H874M0 113.44H874M0 129.28H874M0 145.12H874M0 160.96H874M0 192.64H874M0 208.48H874M0 224.32H874M0 240.16H874M0 271.84H874M0 287.68H874M0 303.52H874M0 319.36H874M0 351.04H874M0 366.88H874M0 382.72H874M0 398.56H874M0 430.24H874M0 446.08H874M0 461.92H874M0 477.76H874M0 509.44H874M0 525.28H874M0 541.12H874M0 556.96H874M0 588.64H874M0 604.48H874M0 620.32H874M0 636.16H874M0 667.84H874M0 683.68H874M0 699.52H874M0 715.36H874M0 747.04H874M0 762.88H874M0 778.72H874M0 794.56H874M0 826.24H874M0 842.08H874M0 857.92H874M0 873.76H874M0 905.44H874M0 921.28H874M0 937.12H874M0 952.96H874" stroke="#1f2c39" stroke-width="1.5" fill="none"/><path d="M57.40 0V977M136.60 0V977M215.80 0V977M295.00 0V977M374.20 0V977M453.40 0V977M532.60 0V977M611.80 0V977M691.00 0V977M770.20 0V977M849.40 0V977M0 18.40H874M0 97.60H874M0 176.80H874M0 256.00H874M0 335.20H874M0 414.40H874M0 493.60H874M0 572.80H874M0 652.00H874M0 731.20H874M0 810.40H874M0 889.60H874M0 968.80H874" stroke="#0d1218" stroke-width="1.3" fill="none"/></svg>
<div class="t" style="left:199px;top:259.20px;width:413px;text-align:center;font-size:8.2px;font-weight:700;color:#d4d4d4;letter-spacing:0px">3: PreOverlay</div><div class="t" style="left:627px;top:259.20px;width:223px;text-align:center;font-size:8.2px;font-weight:700;color:#d4d4d4;letter-spacing:0px">0: Draw Overlay</div><div class="t" style="left:627px;top:607.40px;width:223px;text-align:center;font-size:8.2px;font-weight:700;color:#d4d4d4;letter-spacing:0px">1: Setup User</div><div class="t" style="left:627px;top:766.40px;width:223px;text-align:center;font-size:8.2px;font-weight:700;color:#d4d4d4;letter-spacing:0px">2: Show Combatants &amp; HUDs</div>
<svg width="874" height="977" style="left:0;top:0"><g transform="translate(-2,-154)"><path d="M188 464.5H201" stroke="#1fd01f" stroke-width="2.2" fill="none" stroke-linecap="round"/><path d="M106.5 487 C110 480 122 476 136 475" stroke="#1fd01f" stroke-width="1.8" fill="none" stroke-linecap="round"/><path d="M191 528.3 L232 529" stroke="#ececec" stroke-width="1.6" fill="none" stroke-linecap="round"/><path d="M191 545 H199.5" stroke="#ececec" stroke-width="2" fill="none" stroke-linecap="round"/><path d="M106.5 566.5 C110 560 122 555.5 136 554" stroke="#ececec" stroke-width="1.6" fill="none" stroke-linecap="round"/><path d="M394 448.3 C402 452 406 464 418 464.8" stroke="#ececec" stroke-width="1.6" fill="none" stroke-linecap="round"/><path d="M397 478 C402 477 407 478.5 407 480.5 C407 483 402 485 397 486" stroke="#ececec" stroke-width="1.4" fill="none" stroke-linecap="round"/><path d="M397 496.8 H445 C478 496.8 500 490 502.5 473.5" stroke="#ececec" stroke-width="1.6" fill="none" stroke-linecap="round"/><path d="M306.5 519 C311 514 312 510 312.5 506" stroke="#ececec" stroke-width="1.6" fill="none" stroke-linecap="round"/><path d="M313.5 519 C316 512 322 508 330 506" stroke="#ececec" stroke-width="1.6" fill="none" stroke-linecap="round"/><path d="M397 557 C402 556 407 557.5 407 559.5 C407 562 402 564 397 565" stroke="#ececec" stroke-width="1.4" fill="none" stroke-linecap="round"/><path d="M397 576 H445 C478 576 500 570 502.5 553.5" stroke="#ececec" stroke-width="1.6" fill="none" stroke-linecap="round"/><path d="M312 598 C314 591 322 587 330 585" stroke="#ececec" stroke-width="1.6" fill="none" stroke-linecap="round"/><path d="M397 636.5 C402 635.5 407 637.0 407 639.0 C407 641.5 402 643.5 397 644.5" stroke="#ececec" stroke-width="1.4" fill="none" stroke-linecap="round"/><path d="M397 655 H430 C470 653 498 640 502.5 617" stroke="#ececec" stroke-width="1.6" fill="none" stroke-linecap="round"/><path d="M312 677.5 C314 671 322 666 330 664" stroke="#ececec" stroke-width="1.6" fill="none" stroke-linecap="round"/><path d="M397 718.5 C450 718 496 730 502.5 756" stroke="#ececec" stroke-width="1.6" fill="none" stroke-linecap="round"/><path d="M396 735 H405" stroke="#ececec" stroke-width="2" fill="none" stroke-linecap="round"/><path d="M312 756.5 C314 750 324 745 338 744" stroke="#ececec" stroke-width="1.6" fill="none" stroke-linecap="round"/><path d="M397 781.5 C410 781 412 768 422 765" stroke="#ececec" stroke-width="1.6" fill="none" stroke-linecap="round"/><path d="M587 781 C646.4 779.5 742.2 579.3 739.5 440" stroke="#ececec" stroke-width="1.6" fill="none" stroke-linecap="round"/><path d="M824 701.8 C836 702 841 704 838 710 C830 726 752 760 739.5 788" stroke="#ececec" stroke-width="1.6" fill="none" stroke-linecap="round"/><path d="M824 464.5 H833" stroke="#ececec" stroke-width="2.2" fill="none" stroke-linecap="round"/><path d="M824 512.5 H833" stroke="#ececec" stroke-width="2.2" fill="none" stroke-linecap="round"/><path d="M824 560 H833" stroke="#ececec" stroke-width="2.2" fill="none" stroke-linecap="round"/><path d="M824 607.5 H833" stroke="#ececec" stroke-width="2.2" fill="none" stroke-linecap="round"/><path d="M824 655 H833" stroke="#ececec" stroke-width="2.2" fill="none" stroke-linecap="round"/><path d="M824 813 H833" stroke="#ececec" stroke-width="2.2" fill="none" stroke-linecap="round"/><path d="M739.5 487 C742 481 752 476 769 474" stroke="#ececec" stroke-width="1.6" fill="none" stroke-linecap="round"/><path d="M739.5 535 C742 529 752 524 769 522" stroke="#ececec" stroke-width="1.6" fill="none" stroke-linecap="round"/><path d="M739.5 582 C742 576 752 571 769 569" stroke="#ececec" stroke-width="1.6" fill="none" stroke-linecap="round"/><path d="M739.5 630 C742 624 752 619 769 617" stroke="#ececec" stroke-width="1.6" fill="none" stroke-linecap="round"/><path d="M739.5 677.5 C742 671.5 752 666 769 664" stroke="#ececec" stroke-width="1.6" fill="none" stroke-linecap="round"/><path d="M739.5 835 C742 829 752 825 769 823" stroke="#ececec" stroke-width="1.6" fill="none" stroke-linecap="round"/><path d="M825 860 C836 860 841 862 838 867 C828 884 752 918 739.5 946" stroke="#ececec" stroke-width="1.6" fill="none" stroke-linecap="round"/></g></svg>
<div class="a" style="left:24.2px;top:286.2px;width:162px;height:33.349999999999994px;background:#7ea6dc;border-radius:2.5px;box-shadow:0 0 0 1.5px #6c9ad6;overflow:hidden;"><div class="a" style="left:0;top:0;width:162px;height:17.2px;background:#314865"></div><div class="t" style="left:0;top:4.80px;width:162px;text-align:center;font-size:8.6px;font-weight:700;color:#d8d8d8;text-shadow:0 1px 1px rgba(0,0,0,.5)">Settings</div><div class="t" style="left:6.5px;top:20.80px;width:149px;overflow:hidden;font-size:10.2px;letter-spacing:0.32px;color:#151515">The settings of this schematic.</div></div>
<div class="a" style="left:180.7px;top:306.0px;width:10px;height:10px;border-radius:5px;background:#00c800;box-shadow:0 0 0 0.8px rgba(10,30,10,0.7)"></div>
<div class="a" style="left:24.7px;top:333.72px;width:160.5px;height:65.64999999999999px;background:#c4c4c4;border-radius:1.5px;box-shadow:0 0 1.5px 0.6px rgba(8,10,14,0.85),1px 2px 2px rgba(0,0,0,0.35);overflow:hidden;"><div class="a" style="left:0;top:0;width:160.5px;height:17.2px;background:#555555"></div><div class="t" style="left:0;top:4.28px;width:160.5px;text-align:center;font-size:8.6px;font-weight:700;color:#d8d8d8;text-shadow:0 1px 1px rgba(0,0,0,.5)">Is Battle Action</div><div class="t" style="left:6.5px;top:21.28px;width:147.5px;overflow:hidden;font-size:10.2px;letter-spacing:0.32px;color:#151515">Is not CounterAttack</div><div class="a" style="left:0;top:32.849999999999994px;width:160.5px;height:1px;background:rgba(0,0,0,0.33)"></div><div class="t" style="left:6.5px;top:37.28px;width:147.5px;overflow:hidden;font-size:10.2px;letter-spacing:0.32px;color:#151515">Success</div><div class="a" style="left:0;top:49.0px;width:160.5px;height:1px;background:rgba(0,0,0,0.33)"></div><div class="t" style="left:6.5px;top:53.28px;width:147.5px;overflow:hidden;font-size:10.2px;letter-spacing:0.32px;color:#151515">Failed</div></div>
<div class="a" style="left:179.7px;top:369.67px;width:10px;height:10px;border-radius:5px;background:#00c800;box-shadow:0 0 0 0.8px rgba(10,30,10,0.7)"></div>
<div class="a" style="left:179.7px;top:385.82px;width:10px;height:10px;border-radius:5px;background:#00c800;box-shadow:0 0 0 0.8px rgba(10,30,10,0.7)"></div>
<div class="a" style="left:177.7px;top:328.22px;width:11.5px;height:11.5px;border-radius:2px;background:#232323"><svg width="12" height="12" style="left:0;top:0"><path d="M2.6 6 L4.8 8.2 L9 3.4" stroke="#e0e0e0" stroke-width="1.5" fill="none"/></svg></div>
<div class="a" style="left:24.7px;top:412.92px;width:160.5px;height:65.64999999999999px;background:#c4c4c4;border-radius:1.5px;box-shadow:0 0 1.5px 0.6px rgba(8,10,14,0.85),1px 2px 2px rgba(0,0,0,0.35);overflow:hidden;"><div class="a" style="left:0;top:0;width:160.5px;height:17.2px;background:#555555"></div><div class="t" style="left:0;top:4.08px;width:160.5px;text-align:center;font-size:8.6px;font-weight:700;color:#d8d8d8;text-shadow:0 1px 1px rgba(0,0,0,.5)">In Use Range</div><div class="t" style="left:6.5px;top:21.08px;width:147.5px;overflow:hidden;font-size:10.2px;letter-spacing:0.32px;color:#151515">Machine Object: CounterAttac</div><div class="a" style="left:0;top:32.849999999999994px;width:160.5px;height:1px;background:rgba(0,0,0,0.33)"></div><div class="t" style="left:6.5px;top:37.08px;width:147.5px;overflow:hidden;font-size:10.2px;letter-spacing:0.32px;color:#151515">In Range</div><div class="a" style="left:0;top:49.0px;width:160.5px;height:1px;background:rgba(0,0,0,0.33)"></div><div class="t" style="left:6.5px;top:53.08px;width:147.5px;overflow:hidden;font-size:10.2px;letter-spacing:0.32px;color:#151515">Out Of Range</div></div>
<div class="a" style="left:179.7px;top:448.87px;width:10px;height:10px;border-radius:5px;background:#e00000;box-shadow:0 0 0 0.8px rgba(10,30,10,0.7)"></div>
<div class="a" style="left:179.7px;top:465.02px;width:10px;height:10px;border-radius:5px;background:#e00000;box-shadow:0 0 0 0.8px rgba(10,30,10,0.7)"></div>
<div class="a" style="left:177.7px;top:407.42px;width:11.5px;height:11.5px;border-radius:2px;background:#232323"><svg width="12" height="12" style="left:0;top:0"><path d="M2.6 6 L4.8 8.2 L9 3.4" stroke="#e0e0e0" stroke-width="1.5" fill="none"/></svg></div>
<div class="a" style="left:230.5px;top:286.2px;width:161px;height:65.64999999999999px;background:#c6644a;border-radius:1.5px;box-shadow:0 0 1.5px 0.6px rgba(8,10,14,0.85),1px 2px 2px rgba(0,0,0,0.35);overflow:hidden;"><div class="a" style="left:0;top:0;width:161px;height:17.2px;background:#57281d"></div><div class="t" style="left:0;top:4.80px;width:161px;text-align:center;font-size:8.6px;font-weight:700;color:#d8d8d8;text-shadow:0 1px 1px rgba(0,0,0,.5)">Check Game State</div><div class="t" style="left:6.5px;top:20.80px;width:148px;overflow:hidden;font-size:10.2px;letter-spacing:0.32px;color:#151515">Show ActionOverlay is Inactiv</div><div class="a" style="left:0;top:32.849999999999994px;width:161px;height:1px;background:rgba(0,0,0,0.33)"></div><div class="t" style="left:6.5px;top:36.80px;width:148px;overflow:hidden;font-size:10.2px;letter-spacing:0.32px;color:#151515">Success</div><div class="a" style="left:0;top:49.0px;width:161px;height:1px;background:rgba(0,0,0,0.33)"></div><div class="t" style="left:6.5px;top:52.80px;width:148px;overflow:hidden;font-size:10.2px;letter-spacing:0.32px;color:#151515">Failed</div></div>
<div class="a" style="left:386.0px;top:322.15px;width:10px;height:10px;border-radius:5px;background:#00c800;box-shadow:0 0 0 0.8px rgba(10,30,10,0.7)"></div>
<div class="a" style="left:386.0px;top:338.3px;width:10px;height:10px;border-radius:5px;background:#00c800;box-shadow:0 0 0 0.8px rgba(10,30,10,0.7)"></div>
<div class="a" style="left:384.0px;top:280.7px;width:11.5px;height:11.5px;border-radius:2px;background:#232323"><svg width="12" height="12" style="left:0;top:0"><path d="M2.6 6 L4.8 8.2 L9 3.4" stroke="#e0e0e0" stroke-width="1.5" fill="none"/></svg></div>
<div class="a" style="left:230.5px;top:365.4px;width:161px;height:65.64999999999999px;background:#c4c4c4;border-radius:1.5px;box-shadow:0 0 1.5px 0.6px rgba(8,10,14,0.85),1px 2px 2px rgba(0,0,0,0.35);overflow:hidden;"><div class="a" style="left:0;top:0;width:161px;height:17.2px;background:#555555"></div><div class="t" style="left:0;top:4.60px;width:161px;text-align:center;font-size:8.6px;font-weight:700;color:#d8d8d8;text-shadow:0 1px 1px rgba(0,0,0,.5)">Is Battle Action</div><div class="t" style="left:6.5px;top:20.60px;width:148px;overflow:hidden;font-size:10.2px;letter-spacing:0.32px;color:#151515">Is Skills, Is Magic, Is Support, I</div><div class="t" style="left:6.5px;top:36.60px;width:148px;overflow:hidden;font-size:10.2px;letter-spacing:0.32px;color:#151515">Success</div><div class="a" style="left:0;top:49.0px;width:161px;height:1px;background:rgba(0,0,0,0.33)"></div><div class="t" style="left:6.5px;top:53.60px;width:148px;overflow:hidden;font-size:10.2px;letter-spacing:0.32px;color:#151515">Failed</div></div>
<div class="a" style="left:386.0px;top:401.35px;width:10px;height:10px;border-radius:5px;background:#00c800;box-shadow:0 0 0 0.8px rgba(10,30,10,0.7)"></div>
<div class="a" style="left:386.0px;top:417.5px;width:10px;height:10px;border-radius:5px;background:#00c800;box-shadow:0 0 0 0.8px rgba(10,30,10,0.7)"></div>
<div class="a" style="left:384.0px;top:359.9px;width:11.5px;height:11.5px;border-radius:2px;background:#232323"><svg width="12" height="12" style="left:0;top:0"><path d="M2.6 6 L4.8 8.2 L9 3.4" stroke="#e0e0e0" stroke-width="1.5" fill="none"/></svg></div>
<div class="a" style="left:230.5px;top:444.6px;width:161px;height:65.64999999999999px;background:#c4c4c4;border-radius:1.5px;box-shadow:0 0 1.5px 0.6px rgba(8,10,14,0.85),1px 2px 2px rgba(0,0,0,0.35);overflow:hidden;"><div class="a" style="left:0;top:0;width:161px;height:17.2px;background:#555555"></div><div class="t" style="left:0;top:4.40px;width:161px;text-align:center;font-size:8.6px;font-weight:700;color:#d8d8d8;text-shadow:0 1px 1px rgba(0,0,0,.5)">Can Use Action</div><div class="a" style="left:0;top:32.849999999999994px;width:161px;height:1px;background:rgba(0,0,0,0.33)"></div><div class="t" style="left:6.5px;top:37.40px;width:148px;overflow:hidden;font-size:10.2px;letter-spacing:0.32px;color:#151515">Success</div><div class="t" style="left:6.5px;top:53.40px;width:148px;overflow:hidden;font-size:10.2px;letter-spacing:0.32px;color:#151515">Failed</div></div>
<div class="a" style="left:386.0px;top:480.55px;width:10px;height:10px;border-radius:5px;background:#00c800;box-shadow:0 0 0 0.8px rgba(10,30,10,0.7)"></div>
<div class="a" style="left:386.0px;top:496.7px;width:10px;height:10px;border-radius:5px;background:#00c800;box-shadow:0 0 0 0.8px rgba(10,30,10,0.7)"></div>
<div class="a" style="left:384.0px;top:439.1px;width:11.5px;height:11.5px;border-radius:2px;background:#232323"><svg width="12" height="12" style="left:0;top:0"><path d="M2.6 6 L4.8 8.2 L9 3.4" stroke="#e0e0e0" stroke-width="1.5" fill="none"/></svg></div>
<div class="a" style="left:230.5px;top:523.8px;width:161px;height:65.64999999999999px;background:#9dc656;border-radius:1.5px;box-shadow:0 0 1.5px 0.6px rgba(8,10,14,0.85),1px 2px 2px rgba(0,0,0,0.35);overflow:hidden;"><div class="a" style="left:0;top:0;width:161px;height:17.2px;background:#4a5c2a"></div><div class="t" style="left:0;top:4.20px;width:161px;text-align:center;font-size:8.6px;font-weight:700;color:#d8d8d8;text-shadow:0 1px 1px rgba(0,0,0,.5)">Is Object</div><div class="t" style="left:6.5px;top:21.20px;width:148px;overflow:hidden;font-size:10.2px;letter-spacing:0.32px;color:#151515">Machine Object</div><div class="a" style="left:0;top:32.849999999999994px;width:161px;height:1px;background:rgba(0,0,0,0.33)"></div><div class="t" style="left:6.5px;top:37.20px;width:148px;overflow:hidden;font-size:10.2px;letter-spacing:0.32px;color:#151515">Success</div><div class="a" style="left:0;top:49.0px;width:161px;height:1px;background:rgba(0,0,0,0.33)"></div><div class="t" style="left:6.5px;top:53.20px;width:148px;overflow:hidden;font-size:10.2px;letter-spacing:0.32px;color:#151515">Failed</div></div>
<div class="a" style="left:386.0px;top:559.75px;width:10px;height:10px;border-radius:5px;background:#00c800;box-shadow:0 0 0 0.8px rgba(10,30,10,0.7)"></div>
<div class="a" style="left:386.0px;top:575.9px;width:10px;height:10px;border-radius:5px;background:#00c800;box-shadow:0 0 0 0.8px rgba(10,30,10,0.7)"></div>
<div class="a" style="left:384.0px;top:518.3px;width:11.5px;height:11.5px;border-radius:2px;background:#232323"><svg width="12" height="12" style="left:0;top:0"><path d="M2.6 6 L4.8 8.2 L9 3.4" stroke="#e0e0e0" stroke-width="1.5" fill="none"/></svg></div>
<div class="a" style="left:230.5px;top:603.0px;width:161px;height:33.349999999999994px;background:#c4c4c4;border-radius:1.5px;box-shadow:0 0 1.5px 0.6px rgba(8,10,14,0.85),1px 2px 2px rgba(0,0,0,0.35);overflow:hidden;"><div class="a" style="left:0;top:0;width:161px;height:17.2px;background:#555555"></div><div class="t" style="left:0;top:4.00px;width:161px;text-align:center;font-size:8.6px;font-weight:700;color:#d8d8d8;text-shadow:0 1px 1px rgba(0,0,0,.5)">Grid Rotate To Target</div><div class="t" style="left:6.5px;top:21.00px;width:148px;overflow:hidden;font-size:10.2px;letter-spacing:0.32px;color:#151515">Machine Object: Starting Obje</div></div>
<div class="a" style="left:386.0px;top:622.8px;width:10px;height:10px;border-radius:5px;background:#00c800;box-shadow:0 0 0 0.8px rgba(10,30,10,0.7)"></div>
<div class="a" style="left:384.0px;top:597.5px;width:11.5px;height:11.5px;border-radius:2px;background:#232323"><svg width="12" height="12" style="left:0;top:0"><path d="M2.6 6 L4.8 8.2 L9 3.4" stroke="#e0e0e0" stroke-width="1.5" fill="none"/></svg></div>
<div class="a" style="left:420.5px;top:286.2px;width:161px;height:33.349999999999994px;background:#c4c4c4;border-radius:1.5px;box-shadow:0 0 1.5px 0.6px rgba(8,10,14,0.85),1px 2px 2px rgba(0,0,0,0.35);overflow:hidden;"><div class="a" style="left:0;top:0;width:161px;height:17.2px;background:#555555"></div><div class="t" style="left:0;top:4.80px;width:161px;text-align:center;font-size:8.6px;font-weight:700;color:#d8d8d8;text-shadow:0 1px 1px rgba(0,0,0,.5)">Wait</div><div class="t" style="left:6.5px;top:20.80px;width:148px;overflow:hidden;font-size:10.2px;letter-spacing:0.32px;color:#151515">0.1s</div></div>
<div class="a" style="left:574.0px;top:280.7px;width:11.5px;height:11.5px;border-radius:2px;background:#232323"><svg width="12" height="12" style="left:0;top:0"><path d="M2.6 6 L4.8 8.2 L9 3.4" stroke="#e0e0e0" stroke-width="1.5" fill="none"/></svg></div>
<div class="a" style="left:420.5px;top:365.4px;width:161px;height:33.349999999999994px;background:#2dbb9e;border-radius:1.5px;box-shadow:0 0 1.5px 0.6px rgba(8,10,14,0.85),1px 2px 2px rgba(0,0,0,0.35);overflow:hidden;"><div class="a" style="left:0;top:0;width:161px;height:17.2px;background:#1d5c4c"></div><div class="t" style="left:0;top:4.60px;width:161px;text-align:center;font-size:8.6px;font-weight:700;color:#d8d8d8;text-shadow:0 1px 1px rgba(0,0,0,.5)">Unity Console</div><div class="t" style="left:6.5px;top:20.60px;width:148px;overflow:hidden;font-size:10.2px;letter-spacing:0.32px;color:#151515">Skip Overlay: Non-Overlay Ac</div></div>
<div class="a" style="left:576.0px;top:385.2px;width:10px;height:10px;border-radius:5px;background:#e00000;box-shadow:0 0 0 0.8px rgba(10,30,10,0.7)"></div>
<div class="a" style="left:574.0px;top:359.9px;width:11.5px;height:11.5px;border-radius:2px;background:#232323"><svg width="12" height="12" style="left:0;top:0"><path d="M2.6 6 L4.8 8.2 L9 3.4" stroke="#e0e0e0" stroke-width="1.5" fill="none"/></svg></div>
<div class="a" style="left:420.5px;top:428.76px;width:161px;height:33.349999999999994px;background:#2dbb9e;border-radius:1.5px;box-shadow:0 0 1.5px 0.6px rgba(8,10,14,0.85),1px 2px 2px rgba(0,0,0,0.35);overflow:hidden;"><div class="a" style="left:0;top:0;width:161px;height:17.2px;background:#1d5c4c"></div><div class="t" style="left:0;top:4.24px;width:161px;text-align:center;font-size:8.6px;font-weight:700;color:#d8d8d8;text-shadow:0 1px 1px rgba(0,0,0,.5)">Unity Console</div><div class="t" style="left:6.5px;top:21.24px;width:148px;overflow:hidden;font-size:10.2px;letter-spacing:0.32px;color:#151515">Skip Overlay: Action not usabl</div></div>
<div class="a" style="left:576.0px;top:448.56px;width:10px;height:10px;border-radius:5px;background:#e00000;box-shadow:0 0 0 0.8px rgba(10,30,10,0.7)"></div>
<div class="a" style="left:574.0px;top:423.26px;width:11.5px;height:11.5px;border-radius:2px;background:#232323"><svg width="12" height="12" style="left:0;top:0"><path d="M2.6 6 L4.8 8.2 L9 3.4" stroke="#e0e0e0" stroke-width="1.5" fill="none"/></svg></div>
<div class="a" style="left:420.5px;top:603.0px;width:161px;height:33.349999999999994px;background:#c6644a;border-radius:1.5px;box-shadow:0 0 1.5px 0.6px rgba(8,10,14,0.85),1px 2px 2px rgba(0,0,0,0.35);overflow:hidden;"><div class="a" style="left:0;top:0;width:161px;height:17.2px;background:#57281d"></div><div class="t" style="left:0;top:4.00px;width:161px;text-align:center;font-size:8.6px;font-weight:700;color:#d8d8d8;text-shadow:0 1px 1px rgba(0,0,0,.5)">Change Game State</div><div class="t" style="left:6.5px;top:21.00px;width:148px;overflow:hidden;font-size:10.2px;letter-spacing:0.32px;color:#151515">InAction = Active</div></div>
<div class="a" style="left:576.0px;top:622.8px;width:10px;height:10px;border-radius:5px;background:#00c800;box-shadow:0 0 0 0.8px rgba(10,30,10,0.7)"></div>
<div class="a" style="left:574.0px;top:597.5px;width:11.5px;height:11.5px;border-radius:2px;background:#232323"><svg width="12" height="12" style="left:0;top:0"><path d="M2.6 6 L4.8 8.2 L9 3.4" stroke="#e0e0e0" stroke-width="1.5" fill="none"/></svg></div>
<div class="a" style="left:657.6px;top:286.2px;width:161px;height:33.349999999999994px;background:#6b87ab;border-radius:1.5px;box-shadow:0 0 1.5px 0.6px rgba(8,10,14,0.85),1px 2px 2px rgba(0,0,0,0.35);overflow:hidden;"><div class="a" style="left:0;top:0;width:161px;height:17.2px;background:#2c3a50"></div><div class="t" style="left:0;top:4.80px;width:161px;text-align:center;font-size:8.6px;font-weight:700;color:#d8d8d8;text-shadow:0 1px 1px rgba(0,0,0,.5)">Find Actor Objects</div></div>
<div class="a" style="left:813.1px;top:306.0px;width:10px;height:10px;border-radius:5px;background:#00c800;box-shadow:0 0 0 0.8px rgba(10,30,10,0.7)"></div>
<div class="a" style="left:811.1px;top:280.7px;width:11.5px;height:11.5px;border-radius:2px;background:#232323"><svg width="12" height="12" style="left:0;top:0"><path d="M2.6 6 L4.8 8.2 L9 3.4" stroke="#e0e0e0" stroke-width="1.5" fill="none"/></svg></div>
<div class="a" style="left:657.6px;top:333.72px;width:161px;height:33.349999999999994px;background:#c4c4c4;border-radius:1.5px;box-shadow:0 0 1.5px 0.6px rgba(8,10,14,0.85),1px 2px 2px rgba(0,0,0,0.35);overflow:hidden;"><div class="a" style="left:0;top:0;width:161px;height:17.2px;background:#555555"></div><div class="t" style="left:0;top:4.28px;width:161px;text-align:center;font-size:8.6px;font-weight:700;color:#d8d8d8;text-shadow:0 1px 1px rgba(0,0,0,.5)">Wait</div><div class="t" style="left:6.5px;top:21.28px;width:148px;overflow:hidden;font-size:10.2px;letter-spacing:0.32px;color:#151515">0.2s</div></div>
<div class="a" style="left:813.1px;top:353.52px;width:10px;height:10px;border-radius:5px;background:#00c800;box-shadow:0 0 0 0.8px rgba(10,30,10,0.7)"></div>
<div class="a" style="left:811.1px;top:328.22px;width:11.5px;height:11.5px;border-radius:2px;background:#232323"><svg width="12" height="12" style="left:0;top:0"><path d="M2.6 6 L4.8 8.2 L9 3.4" stroke="#e0e0e0" stroke-width="1.5" fill="none"/></svg></div>
<div class="a" style="left:657.6px;top:381.24px;width:161px;height:33.349999999999994px;background:#c88a30;border-radius:1.5px;box-shadow:0 0 1.5px 0.6px rgba(8,10,14,0.85),1px 2px 2px rgba(0,0,0,0.35);overflow:hidden;"><div class="a" style="left:0;top:0;width:161px;height:17.2px;background:#5e3f1a"></div><div class="t" style="left:0;top:4.76px;width:161px;text-align:center;font-size:8.6px;font-weight:700;color:#d8d8d8;text-shadow:0 1px 1px rgba(0,0,0,.5)">Play Mecanim Animation</div><div class="t" style="left:6.5px;top:20.76px;width:148px;overflow:hidden;font-size:10.2px;letter-spacing:0.32px;color:#151515">Show (wait)</div></div>
<div class="a" style="left:813.1px;top:401.04px;width:10px;height:10px;border-radius:5px;background:#00c800;box-shadow:0 0 0 0.8px rgba(10,30,10,0.7)"></div>
<div class="a" style="left:811.1px;top:375.74px;width:11.5px;height:11.5px;border-radius:2px;background:#232323"><svg width="12" height="12" style="left:0;top:0"><path d="M2.6 6 L4.8 8.2 L9 3.4" stroke="#e0e0e0" stroke-width="1.5" fill="none"/></svg></div>
<div class="a" style="left:657.6px;top:428.76px;width:161px;height:33.349999999999994px;background:#c4c4c4;border-radius:1.5px;box-shadow:0 0 1.5px 0.6px rgba(8,10,14,0.85),1px 2px 2px rgba(0,0,0,0.35);overflow:hidden;"><div class="a" style="left:0;top:0;width:161px;height:17.2px;background:#555555"></div><div class="t" style="left:0;top:4.24px;width:161px;text-align:center;font-size:8.6px;font-weight:700;color:#d8d8d8;text-shadow:0 1px 1px rgba(0,0,0,.5)">Hide Grid Highlights</div><div class="t" style="left:6.5px;top:21.24px;width:148px;overflow:hidden;font-size:10.2px;letter-spacing:0.32px;color:#151515">Hide</div></div>
<div class="a" style="left:813.1px;top:448.56px;width:10px;height:10px;border-radius:5px;background:#00c800;box-shadow:0 0 0 0.8px rgba(10,30,10,0.7)"></div>
<div class="a" style="left:811.1px;top:423.26px;width:11.5px;height:11.5px;border-radius:2px;background:#232323"><svg width="12" height="12" style="left:0;top:0"><path d="M2.6 6 L4.8 8.2 L9 3.4" stroke="#e0e0e0" stroke-width="1.5" fill="none"/></svg></div>
<div class="a" style="left:657.6px;top:476.28px;width:161px;height:33.349999999999994px;background:#9dc656;border-radius:1.5px;box-shadow:0 0 1.5px 0.6px rgba(8,10,14,0.85),1px 2px 2px rgba(0,0,0,0.35);overflow:hidden;"><div class="a" style="left:0;top:0;width:161px;height:17.2px;background:#4a5c2a"></div><div class="t" style="left:0;top:4.72px;width:161px;text-align:center;font-size:8.6px;font-weight:700;color:#d8d8d8;text-shadow:0 1px 1px rgba(0,0,0,.5)">Enable Component</div><div class="t" style="left:6.5px;top:20.72px;width:148px;overflow:hidden;font-size:10.2px;letter-spacing:0.32px;color:#151515">Canvas(Actor 0): : Enable</div></div>
<div class="a" style="left:813.1px;top:496.08px;width:10px;height:10px;border-radius:5px;background:#00c800;box-shadow:0 0 0 0.8px rgba(10,30,10,0.7)"></div>
<div class="a" style="left:811.1px;top:470.78px;width:11.5px;height:11.5px;border-radius:2px;background:#232323"><svg width="12" height="12" style="left:0;top:0"><path d="M2.6 6 L4.8 8.2 L9 3.4" stroke="#e0e0e0" stroke-width="1.5" fill="none"/></svg></div>
<div class="a" style="left:657.6px;top:523.8px;width:161px;height:33.349999999999994px;background:#c9c600;border-radius:1.5px;box-shadow:0 0 1.5px 0.6px rgba(8,10,14,0.85),1px 2px 2px rgba(0,0,0,0.35);overflow:hidden;"><div class="a" style="left:0;top:0;width:161px;height:17.2px;background:#5c5400"></div><div class="t" style="left:0;top:4.20px;width:161px;text-align:center;font-size:8.6px;font-weight:700;color:#d8d8d8;text-shadow:0 1px 1px rgba(0,0,0,.5)">Block Camera Control</div><div class="t" style="left:6.5px;top:21.20px;width:148px;overflow:hidden;font-size:10.2px;letter-spacing:0.32px;color:#151515">Block</div></div>
<div class="a" style="left:813.1px;top:543.6px;width:10px;height:10px;border-radius:5px;background:#00c800;box-shadow:0 0 0 0.8px rgba(10,30,10,0.7)"></div>
<div class="a" style="left:811.1px;top:518.3px;width:11.5px;height:11.5px;border-radius:2px;background:#232323"><svg width="12" height="12" style="left:0;top:0"><path d="M2.6 6 L4.8 8.2 L9 3.4" stroke="#e0e0e0" stroke-width="1.5" fill="none"/></svg></div>
<div class="a" style="left:657.6px;top:634.68px;width:161px;height:33.349999999999994px;background:#c4c4c4;border-radius:1.5px;box-shadow:0 0 1.5px 0.6px rgba(8,10,14,0.85),1px 2px 2px rgba(0,0,0,0.35);overflow:hidden;"><div class="a" style="left:0;top:0;width:161px;height:17.2px;background:#555555"></div><div class="t" style="left:0;top:4.32px;width:161px;text-align:center;font-size:8.6px;font-weight:700;color:#d8d8d8;text-shadow:0 1px 1px rgba(0,0,0,.5)">Get Affected Targets</div></div>
<div class="a" style="left:813.1px;top:654.48px;width:10px;height:10px;border-radius:5px;background:#00c800;box-shadow:0 0 0 0.8px rgba(10,30,10,0.7)"></div>
<div class="a" style="left:811.1px;top:629.18px;width:11.5px;height:11.5px;border-radius:2px;background:#232323"><svg width="12" height="12" style="left:0;top:0"><path d="M2.6 6 L4.8 8.2 L9 3.4" stroke="#e0e0e0" stroke-width="1.5" fill="none"/></svg></div>
<div class="a" style="left:657.6px;top:682.2px;width:161px;height:33.349999999999994px;background:#c4c4c4;border-radius:1.5px;box-shadow:0 0 1.5px 0.6px rgba(8,10,14,0.85),1px 2px 2px rgba(0,0,0,0.35);overflow:hidden;"><div class="a" style="left:0;top:0;width:161px;height:17.2px;background:#555555"></div><div class="t" style="left:0;top:4.80px;width:161px;text-align:center;font-size:8.6px;font-weight:700;color:#d8d8d8;text-shadow:0 1px 1px rgba(0,0,0,.5)">Select Grid Cells</div><div class="t" style="left:6.5px;top:20.80px;width:148px;overflow:hidden;font-size:10.2px;letter-spacing:0.32px;color:#151515">targetCell(Local) Set Mask</div></div>
<div class="a" style="left:813.1px;top:702.0px;width:10px;height:10px;border-radius:5px;background:#00c800;box-shadow:0 0 0 0.8px rgba(10,30,10,0.7)"></div>
<div class="a" style="left:811.1px;top:676.7px;width:11.5px;height:11.5px;border-radius:2px;background:#232323"><svg width="12" height="12" style="left:0;top:0"><path d="M2.6 6 L4.8 8.2 L9 3.4" stroke="#e0e0e0" stroke-width="1.5" fill="none"/></svg></div>
<div class="a" style="left:657.6px;top:793.08px;width:161px;height:33.349999999999994px;background:#c6644a;border-radius:1.5px;box-shadow:0 0 1.5px 0.6px rgba(8,10,14,0.85),1px 2px 2px rgba(0,0,0,0.35);overflow:hidden;"><div class="a" style="left:0;top:0;width:161px;height:17.2px;background:#57281d"></div><div class="t" style="left:0;top:4.92px;width:161px;text-align:center;font-size:8.6px;font-weight:700;color:#d8d8d8;text-shadow:0 1px 1px rgba(0,0,0,.5)">Change Game State</div><div class="t" style="left:6.5px;top:20.92px;width:148px;overflow:hidden;font-size:10.2px;letter-spacing:0.32px;color:#151515">Show Battle HUD = Inactive, S</div></div>
<div class="a" style="left:813.1px;top:812.88px;width:10px;height:10px;border-radius:5px;background:#e00000;box-shadow:0 0 0 0.8px rgba(10,30,10,0.7)"></div>
<div class="a" style="left:811.1px;top:787.58px;width:11.5px;height:11.5px;border-radius:2px;background:#232323"><svg width="12" height="12" style="left:0;top:0"><path d="M2.6 6 L4.8 8.2 L9 3.4" stroke="#e0e0e0" stroke-width="1.5" fill="none"/></svg></div>
<div class="a" style="left:414.8px;top:306px;width:10px;height:10px;border-radius:5px;background:#00c800;box-shadow:0 0 0 0.8px rgba(10,30,10,0.7)"></div>
</div>
<div class="a" style="left:4px;top:1138px;width:247px;height:16px;background:#414141;border-radius:3px;box-shadow:0 0 0 1px #242424;"></div>
<div class="t" style="left:4px;top:1140.2px;width:247px;text-align:center;font-size:12.5px;color:#c4c4c4;letter-spacing:0.12px">New Schematic</div>
<div class="a" style="left:4px;top:1159px;width:247px;height:16px;background:#414141;border-radius:3px;box-shadow:0 0 0 1px #242424;"></div>
<div class="t" style="left:4px;top:1161.2px;width:247px;text-align:center;font-size:12.5px;color:#c4c4c4;letter-spacing:0.12px">Open Schematic</div>
<svg style="left:0;top:0" width="1" height="1"><path d="M258 1144.0L262 1140.0L266 1144.0Z" fill="#b0b0b0"/></svg>
<svg style="left:0;top:0" width="1" height="1"><path d="M258 1183.0L262 1187.0L266 1183.0Z" fill="#b0b0b0"/></svg>
<div class="a" style="left:257.5px;top:1150px;width:9px;height:20px;background:#505050;border-radius:4.5px"></div>
<div class="a" style="left:4px;top:1186px;width:40px;height:6.5px;overflow:hidden"><div class="t" style="left:0;top:0;font-size:12.5px;color:#c4c4c4">Filer:</div></div>
<div class="a" style="left:3px;top:1199px;width:263px;height:131px;background:#2a2a2a;border:1px solid #232323"></div>
<div class="t" style="left:6px;top:1201.0px;font-size:13px;color:#c4c4c4;font-weight:700">Get Affected Targets</div>
<div class="a" style="left:6px;top:1308px;width:28px;height:19px;background:#414141;border-radius:3px;box-shadow:0 0 0 1px #242424;"></div>
<div class="a" style="left:39px;top:1308px;width:28px;height:19px;background:#414141;border-radius:3px;box-shadow:0 0 0 1px #242424;"></div>
<svg style="left:12px;top:1308px" width="18" height="20"><path d="M3.500 4.500h11.500v14h-11.500z" fill="#0a0a0a"/><path d="M1.700 3h11.600v13.600h-11.600z" fill="#0a0a0a"/><path d="M2.700 4h9.600v11.600h-9.600z" fill="#f4f4f4"/><path d="M4.200 5.500h6.600v8.800h-6.600z" fill="#d6d6d6"/><path d="M5 2.600h5l-0.800-1.300h-3.400z" fill="#f4f4f4" stroke="#0a0a0a" stroke-width="0.900"/></svg>
<svg style="left:45px;top:1310px" width="16" height="16"><path d="M9 4.5H2.5v10h10V8.5" fill="none" stroke="#b0b0b0" stroke-width="1.4"/><path d="M6.5 10.5L14 3" stroke="#b0b0b0" stroke-width="1.6"/><path d="M9.5 2h5.5v5.5" fill="none" stroke="#b0b0b0" stroke-width="1.6"/></svg>
<div class="a" style="left:4px;top:1337px;width:281px;height:33px;background:#414141;border-radius:3px;box-shadow:0 0 0 1px #242424;"></div>
<div class="a" style="left:290px;top:1337px;width:273px;height:33px;background:#414141;border-radius:3px;box-shadow:0 0 0 1px #242424;"></div>
<div class="a" style="left:569px;top:1337px;width:302px;height:33px;background:#414141;border-radius:3px;box-shadow:0 0 0 1px #242424;"></div>
<div class="t" style="left:111px;top:1348.8px;font-size:12.5px;color:#c4c4c4;letter-spacing:0.12px">Delete Schematic</div>
<div class="t" style="left:397px;top:1348.8px;font-size:12.5px;color:#c4c4c4;letter-spacing:0.12px">Save Schematic</div>
<div class="t" style="left:675px;top:1348.8px;font-size:12.5px;color:#c4c4c4;letter-spacing:0.12px">Save Schematic As ...</div>
<svg style="left:82px;top:1341px" width="24" height="26"><path d="M3 4.5 L5.5 23.5 Q12 26 18.500 23.5 L21 4.500Z" fill="#dcdcdc" stroke="#111" stroke-width="1.3"/><ellipse cx="12" cy="4" rx="9.5" ry="2.6" fill="#f2f2f2" stroke="#111" stroke-width="1.2"/></svg>
<svg style="left:368px;top:1342px" width="24" height="24"><path d="M1.500 3.5a2 2 0 0 1 2-2h17a2 2 0 0 1 2 2v17a2 2 0 0 1-2 2h-17a2 2 0 0 1-2-2z" fill="#e2e2e2" stroke="#111" stroke-width="1.3"/><path d="M6 1.800h12v7.700h-12z" fill="#2a2a2a"/><path d="M14 3h2.600v5h-2.600z" fill="#e2e2e2"/></svg>
<svg style="left:647px;top:1342px" width="24" height="24"><path d="M1.500 3.5a2 2 0 0 1 2-2h17a2 2 0 0 1 2 2v17a2 2 0 0 1-2 2h-17a2 2 0 0 1-2-2z" fill="#e2e2e2" stroke="#111" stroke-width="1.3"/><path d="M6 1.800h12v7.700h-12z" fill="#2a2a2a"/><path d="M14 3h2.600v5h-2.600z" fill="#e2e2e2"/></svg>
<div class="a" style="left:275px;top:1135px;width:408px;height:94px;background:#2c2c2c;border:1px solid #212121"></div>
<div class="a" style="left:281px;top:1138.3px;width:290px;height:15.5px;background:#1f1f1f;border-radius:3px;border:1px solid #161616"></div>
<svg style="left:285px;top:1142px" width="10" height="10"><circle cx="3.6" cy="3.6" r="2.3" fill="none" stroke="#aaa" stroke-width="1.2"/><path d="M5.3 5.3L8.4 8.4" stroke="#aaa" stroke-width="1.4"/></svg>
<div class="a" style="left:578px;top:1138.3px;width:22px;height:15.7px;background:#3a3a3a;border-radius:3px;box-shadow:0 0 0 1px #242424;"></div>
<div class="a" style="left:601px;top:1138.3px;width:25px;height:15.7px;background:#3a3a3a;border-radius:3px;box-shadow:0 0 0 1px #242424;"></div>
<svg style="left:0;top:0" width="1" height="1"><path d="M586.5 1141.5v10l6-5z" fill="#e8e8e8" stroke="#0a0a0a" stroke-width="1"/><path d="M608 1144h10l-5 5.500z" fill="#e8e8e8" stroke="#0a0a0a" stroke-width="1"/></svg>
<div class="a" style="left:631px;top:1138.3px;width:22px;height:15.7px;background:#39506e;border-radius:3px;box-shadow:0 0 0 1px #242424;"></div>
<div class="a" style="left:654px;top:1138.3px;width:25px;height:15.7px;background:#39506e;border-radius:3px;box-shadow:0 0 0 1px #242424;"></div>
<svg style="left:0;top:0" width="1" height="1"><path d="M637 1145h10v5h-10z" fill="#0a0a0a"/><path d="M638 1146.500h2M641 1146.500h2M644 1146.500h2M638 1148.500h2M641 1148.500h2M644 1148.500h2" stroke="#e8e8e8" stroke-width="1"/><path d="M660 1141.500h13v10.500h-13z" fill="#0a0a0a"/><path d="M661 1143.500h2.500M664.500 1143.500h7.500M661 1145.800h2.500M664.500 1145.800h7.500M661 1148.100h2.500M664.500 1148.100h7.500M661 1150.300h2.500M664.500 1150.300h7.500" stroke="#e8e8e8" stroke-width="1.1"/></svg>
<div class="a" style="left:282px;top:1161px;width:74px;height:17px;background:#c8c8c8;border-radius:3px;box-shadow:0 0 0 1px #242424"></div>
<div class="t" style="left:287px;top:1164.0px;width:64px;overflow:hidden;font-size:12.5px;letter-spacing:0.15px;color:#111">&lt; All Settings</div>
<div class="a" style="left:362px;top:1161px;width:74px;height:17px;background:#3e3e3e;border-radius:3px;box-shadow:0 0 0 1px #242424"></div>
<div class="t" style="left:367px;top:1164.0px;width:64px;overflow:hidden;font-size:12.5px;letter-spacing:0.15px;color:#c4c4c4">Schematic A</div>
<div class="a" style="left:442px;top:1161px;width:74px;height:17px;background:#3e3e3e;border-radius:3px;box-shadow:0 0 0 1px #242424"></div>
<div class="t" style="left:447px;top:1164.0px;width:64px;overflow:hidden;font-size:12.5px;letter-spacing:0.15px;color:#c4c4c4">Machine St</div>
<div class="a" style="left:522px;top:1161px;width:74px;height:17px;background:#3e3e3e;border-radius:3px;box-shadow:0 0 0 1px #242424"></div>
<div class="t" style="left:527px;top:1164.0px;width:64px;overflow:hidden;font-size:12.5px;letter-spacing:0.15px;color:#c4c4c4">Initial Local</div>
<div class="a" style="left:602px;top:1161px;width:74px;height:17px;background:#3e3e3e;border-radius:3px;box-shadow:0 0 0 1px #242424"></div>
<div class="t" style="left:607px;top:1164.0px;width:66px;overflow:hidden;font-size:12.5px;letter-spacing:0.15px;color:#c4c4c4">Actors</div>
<div class="a" style="left:282px;top:1182px;width:74px;height:17px;background:#3e3e3e;border-radius:3px;box-shadow:0 0 0 1px #242424"></div>
<div class="t" style="left:287px;top:1185.0px;width:64px;overflow:hidden;font-size:12.5px;letter-spacing:0.15px;color:#c4c4c4">Prefabs</div>
<div class="a" style="left:362px;top:1182px;width:74px;height:17px;background:#3e3e3e;border-radius:3px;box-shadow:0 0 0 1px #242424"></div>
<div class="t" style="left:367px;top:1185.0px;width:64px;overflow:hidden;font-size:12.5px;letter-spacing:0.15px;color:#c4c4c4">Audio Clips</div>
<div class="a" style="left:442px;top:1182px;width:74px;height:17px;background:#3e3e3e;border-radius:3px;box-shadow:0 0 0 1px #242424"></div>
<div class="t" style="left:447px;top:1185.0px;width:64px;overflow:hidden;font-size:12.5px;letter-spacing:0.15px;color:#c4c4c4">Audio Mixer</div>
<div class="a" style="left:522px;top:1182px;width:74px;height:17px;background:#3e3e3e;border-radius:3px;box-shadow:0 0 0 1px #242424"></div>
<div class="t" style="left:527px;top:1185.0px;width:64px;overflow:hidden;font-size:12.5px;letter-spacing:0.15px;color:#c4c4c4">Audio Mixer</div>
<div class="a" style="left:602px;top:1182px;width:74px;height:17px;background:#3e3e3e;border-radius:3px;box-shadow:0 0 0 1px #242424"></div>
<div class="t" style="left:607px;top:1185.0px;width:66px;overflow:hidden;font-size:12.5px;letter-spacing:0.15px;color:#c4c4c4">Sprites</div>
<div class="a" style="left:282px;top:1203px;width:74px;height:17px;background:#3e3e3e;border-radius:3px;box-shadow:0 0 0 1px #242424"></div>
<div class="t" style="left:287px;top:1206.0px;width:64px;overflow:hidden;font-size:12.5px;letter-spacing:0.15px;color:#c4c4c4">Textures</div>
<div class="a" style="left:362px;top:1203px;width:74px;height:17px;background:#3e3e3e;border-radius:3px;box-shadow:0 0 0 1px #242424"></div>
<div class="t" style="left:367px;top:1206.0px;width:64px;overflow:hidden;font-size:12.5px;letter-spacing:0.15px;color:#c4c4c4">Materials</div>
<div class="a" style="left:442px;top:1203px;width:74px;height:17px;background:#3e3e3e;border-radius:3px;box-shadow:0 0 0 1px #242424"></div>
<div class="t" style="left:447px;top:1206.0px;width:64px;overflow:hidden;font-size:12.5px;letter-spacing:0.15px;color:#c4c4c4">Physic Mate</div>
<div class="a" style="left:522px;top:1203px;width:74px;height:17px;background:#3e3e3e;border-radius:3px;box-shadow:0 0 0 1px #242424"></div>
<div class="t" style="left:527px;top:1206.0px;width:64px;overflow:hidden;font-size:12.5px;letter-spacing:0.15px;color:#c4c4c4">Physics Ma</div>
<div class="a" style="left:275px;top:1249.5px;width:398px;height:71px;background:#2b2b2b;border:1px solid #232323;border-bottom:none"></div>
<svg style="left:0;top:0" width="1" height="1"><path d="M285.500 1268h8.500l-4.250 9.500z" fill="#858585"/></svg>
<div class="t" style="left:297px;top:1264.6px;font-size:16px;color:#c4c4c4;font-weight:700">Schematic Settings</div>
<div class="t" style="left:284px;top:1300.0px;font-size:12px;color:#c4c4c4;letter-spacing:0.1px">Use End Slots</div>
<div class="a" style="left:435px;top:1298px;width:14px;height:14px;background:#252525;border-radius:3px;border:1px solid #1a1a1a"></div>
<div class="a" style="left:435px;top:1318.5px;width:14px;height:3px;background:#252525;border-radius:3px 3px 0 0;border:1px solid #1a1a1a;border-bottom:none"></div>
<svg style="left:0;top:0" width="1" height="1"><path d="M675 1242.0L679 1238.0L683 1242.0Z" fill="#b0b0b0"/></svg>
<svg style="left:0;top:0" width="1" height="1"><path d="M675 1311.0L679 1315.0L683 1311.0Z" fill="#b0b0b0"/></svg>
<div class="a" style="left:674.5px;top:1248px;width:9px;height:19px;background:#505050;border-radius:4.5px"></div>
<svg style="left:0;top:0" width="1" height="1"><path d="M283.5 1323.5L279.5 1327.5L283.5 1331.5Z" fill="#b0b0b0"/></svg>
<svg style="left:0;top:0" width="1" height="1"><path d="M661.0 1323.5L665.0 1327.5L661.0 1331.5Z" fill="#b0b0b0"/></svg>
<div class="a" style="left:289px;top:1323.5px;width:245px;height:8.5px;background:#505050;border-radius:4.3px"></div>
<div class="a" style="left:692.5px;top:1135px;width:180px;height:195px;background:#2c2c2c;border:1px solid #212121"></div>
<div class="a" style="left:698.5px;top:1139px;width:159px;height:15.5px;background:#3c3c3c;border-radius:3px;box-shadow:0 0 0 1px #242424"></div>
<div class="t" style="left:702px;top:1141.2px;font-size:12.5px;color:#c4c4c4;letter-spacing:0.07px">&lt; All Settings &gt;</div>
<div class="a" style="left:695px;top:1158px;width:162px;height:152px;background:#3b3e43;border-left:2px solid #466aa0;overflow:hidden"><div class="t" style="left:5px;top:15px;font-size:13px;font-weight:700;font-style:italic;color:#c2c2c2">• Schematic Settings</div><div class="t" style="left:5px;top:47px;font-size:13px;font-weight:700;font-style:italic;color:#c2c2c2">• Machine Start Variables</div><div class="t" style="left:5px;top:79px;font-size:13px;font-weight:700;font-style:italic;color:#c2c2c2">• Initial Local Variables</div><div class="t" style="left:5px;top:111px;font-size:13px;font-weight:700;font-style:italic;color:#c2c2c2">• Actors</div><div class="t" style="left:15px;top:137px;font-size:12px;font-style:italic;color:#c4c4c4;letter-spacing:0.35px">• Actor 0: Find ActionOverl</div></div>
<svg style="left:0;top:0" width="1" height="1"><path d="M860 1146.0L864 1142.0L868 1146.0Z" fill="#b0b0b0"/></svg>
<svg style="left:0;top:0" width="1" height="1"><path d="M860 1306.0L864 1310.0L868 1306.0Z" fill="#b0b0b0"/></svg>
<div class="a" style="left:859.5px;top:1152.5px;width:9px;height:55px;background:#505050;border-radius:4.5px"></div>
<svg style="left:0;top:0" width="1" height="1"><path d="M705.0 1319L701.0 1323L705.0 1327Z" fill="#b0b0b0"/></svg>
<svg style="left:0;top:0" width="1" height="1"><path d="M846.5 1319L850.5 1323L846.5 1327Z" fill="#b0b0b0"/></svg>
<div class="a" style="left:711px;top:1319px;width:109px;height:8.5px;background:#505050;border-radius:4.3px"></div>
<div class="t" style="left:901px;top:77.8px;font-size:12.5px;color:#c4c4c4;letter-spacing:0.08px">Hierarchy</div>
<div class="t" style="left:998px;top:77.8px;font-size:12.5px;color:#c4c4c4;letter-spacing:0.08px">Scene</div>
<div class="t" style="left:1076px;top:77.8px;font-size:12.5px;color:#c4c4c4;letter-spacing:0.08px">Game</div>
<div class="t" style="left:1151px;top:77.8px;font-size:12.5px;color:#c4c4c4;letter-spacing:0.08px">Animator</div>
<div class="t" style="left:1226px;top:77.8px;font-size:12.5px;color:#c4c4c4;letter-spacing:0.08px">Dialogue</div>
<div class="t" style="left:1298px;top:77.8px;font-size:12.5px;color:#c4c4c4;letter-spacing:0.08px">Build Info</div>
<div class="t" style="left:1372px;top:77.8px;font-size:12.5px;color:#c4c4c4;letter-spacing:-0.08px">Addressables Report</div>
<svg style="left:0;top:0" width="1" height="1"><path d="M886.500 79.500h2M890 79.500h6.500M888.500 83h2M892 83h4.500M888.500 86.500h2M892 86.500h4.500" stroke="#c4c4c4" stroke-width="1.3"/><path d="M985.500 78v10M990.500 78v10M983 80.500h10M983 85.500h10" stroke="#c4c4c4" stroke-width="1.4"/><path d="M1062.500 80.500h7a3 3 0 0 1 0 6.500l-1.500-1.500h-4l-1.500 1.500a3 3 0 0 1 0-6.500z" fill="#c4c4c4"/><circle cx="1062.300" cy="83.500" r="1" fill="#2d2d2d"/><circle cx="1069.700" cy="83.500" r="1" fill="#2d2d2d"/><path d="M1137 79l3 4l-3 5M1140 83h7M1144.500 80.500l2.500 2.500l-2.500 2.500" stroke="#c4c4c4" stroke-width="1.4" fill="none"/><circle cx="2446" cy="78.500" r="1.100" fill="#c4c4c4"/><circle cx="2446" cy="82.500" r="1.100" fill="#c4c4c4"/><circle cx="2446" cy="86.500" r="1.100" fill="#c4c4c4"/></svg>
<div class="t" style="left:881px;top:96.8px;font-size:12.5px;color:#c4c4c4;letter-spacing:0.08px">Game</div>
<div class="t" style="left:977px;top:96.8px;font-size:12.5px;color:#c4c4c4;letter-spacing:0.08px">Display 1</div>
<div class="t" style="left:1057px;top:96.8px;font-size:12.5px;color:#c4c4c4;letter-spacing:0.13px">4K UHD (3840x2160)</div>
<div class="t" style="left:1220px;top:96.8px;font-size:12.5px;color:#c4c4c4;letter-spacing:0.08px">Scale</div>
<div class="t" style="left:1414px;top:96.8px;font-size:12.5px;color:#c4c4c4;letter-spacing:0.08px">0.41x</div>
<div class="t" style="left:1813px;top:96.8px;font-size:12.5px;color:#c4c4c4;letter-spacing:0.08px">Play Focused</div>
<div class="t" style="left:2355px;top:96.8px;font-size:12.5px;color:#c4c4c4;letter-spacing:0.08px">Stats</div>
<div class="t" style="left:2394px;top:96.8px;font-size:12.5px;color:#c4c4c4;letter-spacing:0.08px">Gizmos</div>
<div class="a" style="left:966px;top:93px;width:1px;height:19px;background:#262626;"></div>
<div class="a" style="left:1053px;top:93px;width:1px;height:19px;background:#262626;"></div>
<div class="a" style="left:1213px;top:93px;width:1px;height:19px;background:#262626;"></div>
<div class="a" style="left:1809px;top:93px;width:1px;height:19px;background:#262626;"></div>
<div class="a" style="left:1919px;top:93px;width:1px;height:19px;background:#262626;"></div>
<div class="a" style="left:1946px;top:93px;width:1px;height:19px;background:#262626;"></div>
<div class="a" style="left:2299px;top:93px;width:1px;height:19px;background:#262626;"></div>
<div class="a" style="left:2325px;top:93px;width:1px;height:19px;background:#262626;"></div>
<div class="a" style="left:2351px;top:93px;width:1px;height:19px;background:#262626;"></div>
<div class="a" style="left:2390px;top:93px;width:1px;height:19px;background:#262626;"></div>
<div class="a" style="left:2442px;top:93px;width:1px;height:19px;background:#262626;"></div>
<svg style="left:0;top:0" width="1" height="1"><path d="M955 100.500h8l-4 4.500z M1040.500 100.500h8l-4 4.500z M1200 100.500h8l-4 4.500z M1906.500 100.500h8l-4 4.500z M2446 100.500h8l-4 4.500z" fill="#c4c4c4"/><path d="M1268 102.500h139" stroke="#5e5e5e" stroke-width="1"/><circle cx="1263" cy="102.500" r="5" fill="#999"/><ellipse cx="1932" cy="103.500" rx="3.600" ry="4.600" fill="#c4c4c4"/><circle cx="1932" cy="98.300" r="2" fill="#c4c4c4"/><path d="M1926 99l3 2M1938 99l-3 2M1925.500 103.500h3M1938.500 103.500h-3M1926 108.500l3-2M1938 108.500l-3-2" stroke="#c4c4c4" stroke-width="1.100"/><path d="M2306.500 100.500h2.500l3-2.500v9l-3-2.500h-2.500z" fill="#c4c4c4"/><path d="M2314 99.500a4 4 0 0 1 0 6M2316 98a6.500 6.500 0 0 1 0 9" stroke="#c4c4c4" stroke-width="1.100" fill="none"/><path d="M2331.500 98h12.500v9.500h-12.500z" fill="none" stroke="#c4c4c4" stroke-width="1.200"/><path d="M2333.500 100.500h8.500M2333.500 102.800h8.500M2334.500 105.200h6.500" stroke="#c4c4c4" stroke-width="1.200" stroke-dasharray="1.500 1"/></svg>
<div class="a" style="left:877px;top:113px;width:1582px;height:891px;background:#000;"></div>
<div class="a" style="left:877px;top:114px;width:1582px;height:4px;background:#f2f2f2;"></div>
<div class="a" style="left:877px;top:266px;width:1582px;height:18px;background:#f0f0f0;"></div>
<div class="a" style="left:877px;top:834px;width:1582px;height:13.5px;background:#f0f0f0;"></div>
<div class="a" style="left:2369.5px;top:115.5px;width:86px;height:18px;background:#3e3e3e;border-radius:3px;box-shadow:0 0 0 1px #1c1c1c"></div>
<div class="t" style="left:2373px;top:118.8px;font-size:12.5px;color:#c4c4c4;letter-spacing:0.05px">English (en)</div>
<svg style="left:0;top:0" width="1" height="1"><path d="M2441.500 122h8l-4 4.500z" fill="#c4c4c4"/></svg>
<div class="t" style="left:1616.300px;top:163.100px;font-size:57.500px;color:#fff;-webkit-text-stroke:0.55px #fff;transform-origin:0 0;transform:scaleX(0.86);letter-spacing:0.3px">Strike</div>
<svg style="left:0;top:0" width="1" height="1"><rect x="1542.54" y="172.40" width="3.43" height="3.43" fill="#161616"/><rect x="1545.82" y="172.40" width="3.43" height="3.43" fill="#161616"/><rect x="1552.38" y="172.40" width="3.43" height="3.43" fill="#161616"/><rect x="1542.54" y="175.68" width="3.43" height="3.43" fill="#c8883a"/><rect x="1545.82" y="175.68" width="3.43" height="3.43" fill="#ea8c90"/><rect x="1549.10" y="175.68" width="3.43" height="3.43" fill="#161616"/><rect x="1552.38" y="175.68" width="3.43" height="3.43" fill="#c8883a"/><rect x="1555.66" y="175.68" width="3.43" height="3.43" fill="#161616"/><rect x="1558.94" y="175.68" width="3.43" height="3.43" fill="#161616"/><rect x="1542.54" y="178.96" width="3.43" height="3.43" fill="#c8883a"/><rect x="1545.82" y="178.96" width="3.43" height="3.43" fill="#8e3e46"/><rect x="1549.10" y="178.96" width="3.43" height="3.43" fill="#8e3e46"/><rect x="1552.38" y="178.96" width="3.43" height="3.43" fill="#8e3e46"/><rect x="1555.66" y="178.96" width="3.43" height="3.43" fill="#8e3e46"/><rect x="1558.94" y="178.96" width="3.43" height="3.43" fill="#c8883a"/><rect x="1562.22" y="178.96" width="3.43" height="3.43" fill="#161616"/><rect x="1542.54" y="182.24" width="3.43" height="3.43" fill="#c8883a"/><rect x="1545.82" y="182.24" width="3.43" height="3.43" fill="#ea8c90"/><rect x="1549.10" y="182.24" width="3.43" height="3.43" fill="#8e3e46"/><rect x="1552.38" y="182.24" width="3.43" height="3.43" fill="#c8883a"/><rect x="1555.66" y="182.24" width="3.43" height="3.43" fill="#8e3e46"/><rect x="1558.94" y="182.24" width="3.43" height="3.43" fill="#8e3e46"/><rect x="1562.22" y="182.24" width="3.43" height="3.43" fill="#5c1410"/><rect x="1565.50" y="182.24" width="3.43" height="3.43" fill="#161616"/><rect x="1542.54" y="185.52" width="3.43" height="3.43" fill="#c8883a"/><rect x="1545.82" y="185.52" width="3.43" height="3.43" fill="#e86c6c"/><rect x="1549.10" y="185.52" width="3.43" height="3.43" fill="#c8883a"/><rect x="1552.38" y="185.52" width="3.43" height="3.43" fill="#c8883a"/><rect x="1555.66" y="185.52" width="3.43" height="3.43" fill="#c8883a"/><rect x="1558.94" y="185.52" width="3.43" height="3.43" fill="#8e3e46"/><rect x="1562.22" y="185.52" width="3.43" height="3.43" fill="#5c1410"/><rect x="1565.50" y="185.52" width="3.43" height="3.43" fill="#c8883a"/><rect x="1568.78" y="185.52" width="3.43" height="3.43" fill="#161616"/><rect x="1535.98" y="188.80" width="3.43" height="3.43" fill="#8e3e46"/><rect x="1539.26" y="188.80" width="3.43" height="3.43" fill="#5c1410"/><rect x="1542.54" y="188.80" width="3.43" height="3.43" fill="#8e3e46"/><rect x="1545.82" y="188.80" width="3.43" height="3.43" fill="#8e3e46"/><rect x="1549.10" y="188.80" width="3.43" height="3.43" fill="#5c1410"/><rect x="1552.38" y="188.80" width="3.43" height="3.43" fill="#8e3e46"/><rect x="1555.66" y="188.80" width="3.43" height="3.43" fill="#c8883a"/><rect x="1558.94" y="188.80" width="3.43" height="3.43" fill="#8e3e46"/><rect x="1562.22" y="188.80" width="3.43" height="3.43" fill="#5c1410"/><rect x="1565.50" y="188.80" width="3.43" height="3.43" fill="#8e3e46"/><rect x="1532.70" y="192.08" width="3.43" height="3.43" fill="#8e3e46"/><rect x="1535.98" y="192.08" width="3.43" height="3.43" fill="#5c1410"/><rect x="1539.26" y="192.08" width="3.43" height="3.43" fill="#8e3e46"/><rect x="1542.54" y="192.08" width="3.43" height="3.43" fill="#e86c6c"/><rect x="1545.82" y="192.08" width="3.43" height="3.43" fill="#5c1410"/><rect x="1549.10" y="192.08" width="3.43" height="3.43" fill="#5c1410"/><rect x="1552.38" y="192.08" width="3.43" height="3.43" fill="#5c1410"/><rect x="1555.66" y="192.08" width="3.43" height="3.43" fill="#5c1410"/><rect x="1558.94" y="192.08" width="3.43" height="3.43" fill="#8e3e46"/><rect x="1562.22" y="192.08" width="3.43" height="3.43" fill="#8e3e46"/><rect x="1565.50" y="192.08" width="3.43" height="3.43" fill="#5c1410"/><rect x="1535.98" y="195.36" width="3.43" height="3.43" fill="#8e3e46"/><rect x="1539.26" y="195.36" width="3.43" height="3.43" fill="#e86c6c"/><rect x="1542.54" y="195.36" width="3.43" height="3.43" fill="#e86c6c"/><rect x="1545.82" y="195.36" width="3.43" height="3.43" fill="#5c1410"/><rect x="1549.10" y="195.36" width="3.43" height="3.43" fill="#5c1410"/><rect x="1552.38" y="195.36" width="3.43" height="3.43" fill="#8e3e46"/><rect x="1555.66" y="195.36" width="3.43" height="3.43" fill="#8e3e46"/><rect x="1558.94" y="195.36" width="3.43" height="3.43" fill="#5c1410"/><rect x="1562.22" y="195.36" width="3.43" height="3.43" fill="#8e3e46"/><rect x="1539.26" y="198.64" width="3.43" height="3.43" fill="#c8883a"/><rect x="1542.54" y="198.64" width="3.43" height="3.43" fill="#c8883a"/><rect x="1545.82" y="198.64" width="3.43" height="3.43" fill="#c8883a"/><rect x="1549.10" y="198.64" width="3.43" height="3.43" fill="#5c1410"/><rect x="1552.38" y="198.64" width="3.43" height="3.43" fill="#5c1410"/><rect x="1555.66" y="198.64" width="3.43" height="3.43" fill="#5c1410"/><rect x="1558.94" y="198.64" width="3.43" height="3.43" fill="#8e3e46"/><rect x="1562.22" y="198.64" width="3.43" height="3.43" fill="#5c1410"/><rect x="1542.54" y="201.92" width="3.43" height="3.43" fill="#8e3e46"/><rect x="1545.82" y="201.92" width="3.43" height="3.43" fill="#ea8c90"/><rect x="1549.10" y="201.92" width="3.43" height="3.43" fill="#c8883a"/><rect x="1552.38" y="201.92" width="3.43" height="3.43" fill="#c8883a"/><rect x="1555.66" y="201.92" width="3.43" height="3.43" fill="#8e3e46"/><rect x="1558.94" y="201.92" width="3.43" height="3.43" fill="#5c1410"/><rect x="1539.26" y="205.20" width="3.43" height="3.43" fill="#c8883a"/><rect x="1542.54" y="205.20" width="3.43" height="3.43" fill="#e86c6c"/><rect x="1545.82" y="205.20" width="3.43" height="3.43" fill="#8e3e46"/><rect x="1549.10" y="205.20" width="3.43" height="3.43" fill="#8e3e46"/><rect x="1552.38" y="205.20" width="3.43" height="3.43" fill="#5c1410"/><rect x="1555.66" y="205.20" width="3.43" height="3.43" fill="#5c1410"/><rect x="1539.26" y="208.48" width="3.43" height="3.43" fill="#c8883a"/><rect x="1542.54" y="208.48" width="3.43" height="3.43" fill="#ea8c90"/><rect x="1545.82" y="208.48" width="3.43" height="3.43" fill="#e86c6c"/><rect x="1549.10" y="208.48" width="3.43" height="3.43" fill="#c8883a"/><rect x="1552.38" y="208.48" width="3.43" height="3.43" fill="#8e3e46"/><rect x="1555.66" y="208.48" width="3.43" height="3.43" fill="#8e3e46"/><rect x="1542.54" y="211.76" width="3.43" height="3.43" fill="#c8883a"/><rect x="1545.82" y="211.76" width="3.43" height="3.43" fill="#c8883a"/><rect x="1549.10" y="211.76" width="3.43" height="3.43" fill="#8e3e46"/><rect x="1552.38" y="211.76" width="3.43" height="3.43" fill="#8e3e46"/><rect x="1555.66" y="211.76" width="3.43" height="3.43" fill="#8e3e46"/></svg>
<div class="a" style="left:2266px;top:477px;width:42px;height:226px;background:#000;border:3px solid #ececec"></div>
<div class="a" style="left:887px;top:415px;width:145px;height:288px;background:#000;border:3px solid #ececec"></div>
<div class="a" style="left:887px;top:538px;width:145px;height:3px;background:#ececec;"></div>
<div class="t" style="left:887px;top:553.500px;width:145px;text-align:center;font-size:29px;color:#fff;letter-spacing:-1px">DAPH</div>
<div class="t" style="left:887px;top:587.500px;width:145px;text-align:center;font-size:19.500px;color:#fff;letter-spacing:-0.9px">Lvl 1</div>
<div class="t" style="left:900.5px;top:611.500px;font-size:19.500px;color:#fff;letter-spacing:-1.7px">HP</div>
<div class="t" style="left:998px;top:609px;width:21px;text-align:right;font-size:23px;color:#fff">5</div>
<div class="a" style="left:900px;top:634px;width:118px;height:3px;background:#ececec;"></div>
<div class="a" style="left:2304.2px;top:415px;width:145px;height:288px;background:#000;border:3px solid #ececec"></div>
<div class="a" style="left:2304.2px;top:538px;width:145px;height:3px;background:#ececec;"></div>
<div class="t" style="left:2304.2px;top:553.500px;width:145px;text-align:center;font-size:29px;color:#fff;letter-spacing:-1px">GANY</div>
<div class="t" style="left:2304.2px;top:587.500px;width:145px;text-align:center;font-size:19.500px;color:#fff;letter-spacing:-0.9px">Lvl 1</div>
<div class="t" style="left:2317.7px;top:611.500px;font-size:19.500px;color:#fff;letter-spacing:-1.7px">HP</div>
<div class="t" style="left:2415.2px;top:609px;width:21px;text-align:right;font-size:23px;color:#fff">5</div>
<div class="a" style="left:2317.2px;top:634px;width:118px;height:3px;background:#ececec;"></div>
<div class="a" style="left:2274px;top:581.5px;width:18px;height:17px;background:#fff;border-radius:2.500px;box-shadow:inset 0 0 0 1px #bbb"></div>
<div class="t" style="left:2274px;top:586.500px;width:18px;text-align:center;font-size:7px;font-weight:700;color:#222">F</div>
<svg style="left:0;top:0" width="1" height="1"><polygon points="1545.1,488.0 1561.3,489.2 1567.3,497.4 1554.5,509.4 1552.8,538.4 1557.1,555.6 1546.8,586.4 1544.2,579.5 1535.7,560.7 1530.5,547.0 1530.5,526.5 1535.7,502.5" fill="#8c8884" /><polygon points="1533.1,535.0 1538.2,526.5 1539.9,552.1 1535.7,555.6" fill="#c4c0bc" /><polygon points="1552.8,509.4 1566.5,498.2 1581.9,494.0 1599.0,499.1 1612.7,509.4 1618.7,535.0 1616.9,545.3 1610.1,540.2 1605.8,521.3 1592.1,533.3 1578.4,535.0 1573.3,545.3 1566.5,541.9 1554.5,535.0 1548.5,521.3" fill="#9c9894" /><polygon points="1566.5,512.8 1578.4,510.2 1592.1,511.9 1605.8,514.5 1612.7,521.3 1605.8,521.3 1595.6,523.0 1581.9,521.3 1569.9,519.6" fill="#cfcbc8" /><polygon points="1555.3,537.6 1568.2,543.6 1578.4,536.7 1592.1,534.2 1605.0,523.0 1607.5,538.4 1606.7,552.1 1599.0,559.0 1581.9,563.3 1569.9,560.7 1561.3,552.1 1554.5,545.3" fill="#f6b98a" /><polygon points="1555.3,537.6 1561.3,538.4 1563.0,547.0 1557.1,547.0" fill="#d88868" /><polygon points="1579.3,538.4 1585.3,537.6 1585.3,547.9 1579.3,547.9" fill="#5a5a3a" /><polygon points="1581.5,542.7 1585.6,542.7 1585.6,547.9 1581.5,547.9" fill="#c8b428" /><polygon points="1579.0,539.3 1580.7,539.3 1580.7,547.9 1579.0,547.9" fill="#ffffff" /><polygon points="1600.7,536.7 1604.1,535.9 1604.1,547.0 1600.7,547.0" fill="#4a4a4a" /><polygon points="1584.6,554.7 1590.4,554.7 1590.4,558.1 1584.6,558.1" fill="#a04848" /><polygon points="1565.6,561.5 1592.1,565.0 1590.4,571.0 1573.3,571.0" fill="#a8a8a8" /><polygon points="1559.6,565.8 1569.0,571.0 1568.2,588.1 1583.6,589.8 1585.3,596.6 1578.4,606.9 1556.2,606.9 1546.8,603.5 1546.8,594.9 1552.8,582.9" fill="#f4b488" /><polygon points="1552.8,600.0 1578.4,601.8 1578.4,606.9 1556.2,606.9 1546.8,603.5" fill="#c07858" /><polygon points="1605.8,561.5 1612.7,559.0 1622.9,565.8 1625.5,574.4 1619.5,581.2 1612.7,596.6 1603.3,595.8 1601.5,588.1 1607.5,579.5 1605.0,569.2" fill="#e8a078" /><polygon points="1603.3,588.1 1612.7,588.1 1612.7,596.6 1603.3,595.8" fill="#a05848" /><polygon points="1587.9,614.6 1594.7,614.6 1594.7,618.9 1587.9,618.9" fill="#d8d8d8" /><polygon points="1566.5,610.3 1605.8,610.3 1605.8,615.4 1566.5,615.4" fill="#120a0c" /><polygon points="1542.5,679.6 1556.2,679.6 1556.2,686.5 1542.5,686.5" fill="#26262c" /><polygon points="1548.5,663.4 1560.5,663.4 1557.9,679.6 1548.5,679.6" fill="#0c0c10" /><polygon points="1599.0,670.2 1612.7,670.2 1628.1,677.9 1628.1,683.0 1599.0,683.0" fill="#121216" /><polygon points="1617.8,677.9 1628.1,677.9 1628.1,683.0 1617.8,683.0" fill="#3c3c44" /><polygon points="1634.6,523.0 1640.0,523.4 1643.1,527.3 1642.6,530.7 1637.5,529.9" fill="#ffffff" /><rect x="1722" y="473" width="87" height="17" fill="#fff"/><polygon points="1740.5,509.2 1759.8,494.2 1778.0,492.1 1798.3,498.5 1811.1,513.5 1812.8,534.9 1802.6,549.8 1789.7,558.4 1787.6,539.1 1768.3,526.3 1751.2,528.4 1747.0,541.3 1740.5,528.4" fill="#a8683a" /><polygon points="1741.6,510.3 1759.8,495.3 1778.0,493.2 1797.2,499.6 1809.0,513.5 1804.7,524.2 1789.7,515.6 1776.9,524.2 1759.8,522.0 1747.0,528.4" fill="#ee9a1e" /><polygon points="1759.8,509.2 1776.9,502.8 1781.2,515.6 1768.3,522.0" fill="#c87828" /><polygon points="1749.1,529.5 1768.3,525.2 1787.6,539.1 1800.4,538.1 1801.5,549.8 1785.5,560.5 1759.8,560.5 1749.1,549.8" fill="#f2aa7c" /><polygon points="1749.1,529.5 1768.3,525.2 1787.6,537.0 1768.3,537.0 1751.2,534.9" fill="#d88858" /><polygon points="1792.9,540.2 1801.5,539.1 1801.5,549.8 1795.1,549.8" fill="#e09070" /><polygon points="1751.2,539.6 1757.2,539.6 1757.2,542.1 1751.2,542.1" fill="#3a4a6a" /><polygon points="1767.9,539.6 1781.2,539.6 1781.2,542.1 1767.9,542.1" fill="#3a4a6a" /><polygon points="1763.0,552.4 1774.3,552.4 1774.3,556.7 1763.0,556.7" fill="#ffffff" /><polygon points="1768.3,561.0 1779.5,561.0 1779.5,569.5 1768.3,569.5" fill="#f0a070" /><polygon points="1766.2,569.5 1777.3,569.5 1777.3,612.3 1761.5,612.3 1763.2,579.8" fill="#d4d4d4" /><polygon points="1761.5,588.3 1777.3,588.3 1777.3,612.3 1761.5,612.3" fill="#bcbcbc" /><polygon points="1706.3,575.5 1713.8,572.3 1722.4,573.4 1722.4,586.2 1725.6,588.3 1721.3,593.7 1713.8,591.6 1713.8,585.1 1707.4,581.9" fill="#e08a68" /><polygon points="1780.1,581.9 1787.6,575.5 1800.4,574.4 1801.5,581.9 1797.2,588.3 1787.6,590.5 1781.2,587.3" fill="#e89874" /><polygon points="1729.8,569.5 1756.6,568.0 1756.6,572.3 1740.5,575.5 1729.8,576.6" fill="#262626" /><polygon points="1789.7,565.9 1805.8,565.2 1821.8,571.2 1821.8,575.5 1809.0,575.5 1790.8,571.2" fill="#242424" /><polygon points="1740.5,586.2 1754.4,586.2 1754.4,587.9 1740.5,587.9" fill="#4a4a4a" /><polygon points="1720.9,536.6 1740.5,537.4 1750.2,543.0 1750.2,545.1 1739.5,540.4 1720.9,539.6" fill="#ffffff" /><path d="M1684.900 629 C1685 640 1690 658 1697.800 665.300 C1704 672 1712 676.500 1719 678 L1732 675 C1722 671 1715 667 1710.600 662 C1703 655 1697 648 1695 641 C1692 636 1690 632 1689.600 629Z" fill="#fff" stroke="#fff" stroke-width="0.800" stroke-linejoin="round"/><path d="M1833.600 575.500 C1838 580 1841 584 1841.300 590 C1842.500 598 1842.500 606 1841 614 C1839 623 1836 630 1831.400 635.400 C1827 641 1823 645 1818.600 647 C1814 648.300 1810 648.300 1806.800 647.800 L1804.300 642.900 C1811 642.500 1817 640.500 1821.800 637.500 C1827 633 1830.500 628 1832.500 622.600 C1835 617 1836.500 611 1836.800 605.500 C1837 599 1836.500 593 1835.700 588.300 C1835 583 1833.500 579 1832 576.600Z" fill="#fff" stroke="#fff" stroke-width="0.800" stroke-linejoin="round"/><rect x="1740" y="681.300" width="39.500" height="2.400" fill="#fff"/><polygon points="1725.6,677.1 1739.5,671.8 1740.1,661.1 1755.5,661.1 1755.5,678.2 1729.8,681.4" fill="#2e1408" /><polygon points="1725.6,677.1 1740.5,673.9 1742.7,679.3 1729.8,681.4" fill="#5e3018" /><polygon points="1795.1,664.3 1804.7,664.3 1805.8,678.2 1812.2,680.3 1812.2,685.7 1797.2,686.7 1797.2,678.2" fill="#2e1408" /><polygon points="1797.2,679.3 1812.2,680.3 1812.2,685.7 1797.2,686.7" fill="#5e3018" /><path d="M1836 533L1844.5 522.5" stroke="#fff" stroke-width="3.6" stroke-linecap="round"/><path d="M1855.5 678.8L1861 681.5" stroke="#fff" stroke-width="3.4" stroke-linecap="round"/><path d="M1843 706.5L1852 716.5" stroke="#fff" stroke-width="4.2" stroke-linecap="round"/><path d="M1654 714.5L1662.5 708.5" stroke="#fff" stroke-width="5" stroke-linecap="round"/><path d="M1697.8 735.5L1702.5 728.5" stroke="#fff" stroke-width="4" stroke-linecap="round"/><g transform="translate(886,414) scale(0.091299)"><path d="M270 1355 C300 1310 350 1285 400 1278 L400 1355 Z M1185 1212 C1260 1222 1345 1250 1392 1300 L1392 1355 L1185 1355 Z" fill="#f8dccc"/><circle cx="1300" cy="1290" r="18" fill="#fff4ee"/><path d="M640 940 L965 940 L985 1120 L630 1120 Z" fill="#e6b0a6"/><path d="M690 1000 C760 1050 880 1050 950 990 L960 1060 L680 1070 Z" fill="#f0c4b4"/><path d="M378 1355 L400 1288 L612 1188 L800 1252 L1005 1178 L1182 1228 L1192 1355 Z" fill="#1e1810"/><path d="M612 1195 L662 1098 L990 1088 L1042 1185 L962 1236 L820 1247 L700 1236 Z" fill="#969696"/><path d="M718 1125 L922 1114 L838 1228 Z" fill="#dadada"/><path d="M296 560 C300 480 380 420 430 340 C480 230 600 140 700 108 C800 72 950 90 1050 180 C1150 270 1180 400 1285 505 C1245 500 1232 520 1250 590 C1232 680 1185 760 1142 800 C1125 850 1100 905 1078 945 L1090 760 L1080 620 L520 600 L548 800 C560 880 585 960 660 1040 C590 990 545 900 545 790 L430 640 C380 610 330 640 320 622 Z" fill="#8c8882"/><path d="M445 640 C420 690 445 770 525 785 L525 640 Z M1075 700 C1120 690 1110 760 1075 790 Z" fill="#f4cdbc"/><path d="M520 560 C508 700 540 862 640 962 C720 1042 880 1042 962 962 C1042 880 1082 760 1080 640 L1060 590 L700 520 Z" fill="#fae4d6"/><path d="M530 640 C560 600 700 610 760 650 L1060 600 L1078 680 C1000 630 900 640 860 680 C780 640 640 630 560 680 Z" fill="#eec4b4"/><ellipse cx="652" cy="695" rx="66" ry="38" fill="#fbf8f4"/><ellipse cx="948" cy="692" rx="66" ry="38" fill="#fbf8f4"/><circle cx="660" cy="690" r="34" fill="#988a30"/><circle cx="948" cy="688" r="34" fill="#988a30"/><circle cx="660" cy="690" r="13" fill="#3c3212"/><circle cx="948" cy="688" r="13" fill="#3c3212"/><path d="M575 668 Q650 628 735 678 M872 676 Q950 628 1035 655" stroke="#4a3c3a" stroke-width="11" fill="none" stroke-linecap="round"/><path d="M778 745 C745 790 740 840 795 852 C830 848 845 835 850 820 C810 830 780 800 778 745 Z" fill="#e0a49c"/><path d="M700 888 Q805 935 912 884" stroke="#a05c52" stroke-width="8" fill="none" stroke-linecap="round"/><ellipse cx="812" cy="958" rx="34" ry="13" fill="#e8aea6"/><path d="M296 560 C310 470 390 420 440 340 C500 220 620 130 720 104 C830 74 960 100 1050 185 C1140 270 1180 400 1278 500 C1232 510 1240 560 1246 590 C1200 655 1172 705 1150 725 C1140 665 1100 625 1060 603 C960 642 820 640 720 560 C680 522 620 470 590 430 C562 480 560 560 520 640 C490 700 470 650 440 640 C400 600 350 640 310 612 Z" fill="#e2ded6"/><path d="M650 160 C760 150 900 250 1000 400 C1060 500 1085 560 1062 603 C900 560 760 420 690 250 Z" fill="#b2aea6"/><path d="M655 165 C700 330 800 500 1010 605 C880 540 740 400 700 170 Z" fill="#8a8680"/><path d="M760 200 C840 320 950 450 1060 560 C960 480 850 360 790 215 Z" fill="#e6e2da"/><path d="M880 260 C960 340 1040 440 1090 560 C1050 470 980 370 900 275 Z" fill="#8e8a84"/><path d="M380 440 C340 500 310 560 330 620 C350 560 380 500 420 450 Z" fill="#a4a098"/><path d="M520 300 C480 420 470 540 500 650 C500 540 520 420 560 310 Z" fill="#8e8a84"/><path d="M605 195 C560 330 555 470 640 585 C585 480 588 330 645 200 Z" fill="#9a968e"/><path d="M820 190 C950 280 1085 420 1125 610 C1060 450 960 330 825 225 Z" fill="#a4a098"/><path d="M470 330 C420 430 400 520 440 630 C420 520 450 420 500 340 Z" fill="#a4a098"/><path d="M1150 725 C1200 760 1250 780 1290 800 C1240 760 1200 720 1190 680 Z" fill="#8c8882"/></g><g transform="translate(2304,414) scale(0.091299)"><path d="M440 1355 L446 1258 C480 1180 540 1130 602 1108 L645 1355 Z M955 1355 L1000 1108 C1060 1130 1112 1180 1136 1260 L1136 1355 Z" fill="#241e1c"/><path d="M598 1018 L992 1018 L1002 1132 L862 1196 L800 1212 L740 1196 L598 1136 Z" fill="#c48a72"/><path d="M588 1140 L645 1355 L958 1355 L1008 1128 L862 1200 L800 1216 L740 1200 Z" fill="#f8f8f8"/><path d="M588 1140 L735 1200 L700 1240 L620 1260 Z" fill="#c6c6c6"/><path d="M758 1216 L800 1204 L832 1216 L862 1355 L718 1355 Z" fill="#9ea29e"/><path d="M235 420 C330 400 350 330 360 220 C300 215 330 200 360 210 C450 160 480 100 520 60 C700 40 860 28 1000 110 C1010 150 1000 170 1100 230 C1200 340 1222 500 1192 622 C1182 700 1122 752 1060 762 C1090 700 1080 620 1040 560 L1000 400 C900 480 760 520 640 560 C580 620 540 700 545 765 C480 742 420 700 400 622 C360 640 330 640 318 655 C298 560 320 480 360 402 C320 422 280 432 235 420 Z" fill="#c49450"/><path d="M470 720 C408 722 420 822 470 872 L522 882 L522 742 Z M1088 720 C1172 700 1172 802 1120 862 L1070 882 Z" fill="#f8d4b8"/><path d="M520 600 C500 760 540 900 620 1002 C700 1102 880 1112 962 1022 C1042 932 1082 800 1080 700 L1060 560 L1015 370 L800 420 L560 560 Z" fill="#fde2c8"/><path d="M540 640 C600 580 700 590 760 640 L1000 420 L1062 600 C1000 580 920 590 860 640 C800 600 640 600 560 700 Z" fill="#f4caa8"/><ellipse cx="655" cy="692" rx="72" ry="42" fill="#fbf6f2"/><ellipse cx="945" cy="692" rx="72" ry="42" fill="#fbf6f2"/><circle cx="660" cy="688" r="38" fill="#7c4c4a"/><circle cx="940" cy="688" r="38" fill="#7c4c4a"/><circle cx="660" cy="688" r="15" fill="#2c1818"/><circle cx="940" cy="688" r="15" fill="#2c1818"/><path d="M578 668 Q650 625 735 660 M865 660 Q950 625 1022 668" stroke="#4a3430" stroke-width="11" fill="none" stroke-linecap="round"/><path d="M590 612 Q680 580 752 622 M868 612 Q960 584 1042 610" stroke="#c89858" stroke-width="13" fill="none" stroke-linecap="round"/><path d="M758 858 Q795 905 832 858 L822 848 L768 848 Z" fill="#dea090"/><path d="M685 940 Q792 992 902 934" stroke="#8a4c42" stroke-width="8" fill="none" stroke-linecap="round"/><ellipse cx="796" cy="1012" rx="30" ry="11" fill="#e8aaa2"/><circle cx="998" cy="828" r="8" fill="#b07060"/><path d="M245 418 C335 395 360 330 372 228 C455 170 490 105 530 68 C700 50 860 40 990 115 C1000 155 1000 178 1092 236 C1190 345 1210 500 1182 620 C1172 695 1120 745 1070 752 C1096 700 1088 620 1048 556 L1004 392 C900 470 760 512 636 552 C574 614 532 690 536 752 C482 732 430 694 410 616 C365 632 335 632 326 640 C308 560 330 480 372 396 C330 416 290 426 245 418 Z" fill="#f6dea0"/><path d="M575 335 C700 250 860 200 1005 198 C900 262 800 330 740 422 C700 472 640 502 598 522 C640 442 700 380 782 332 C720 336 650 340 575 335 Z" fill="#d8a862"/><path d="M1000 198 C1012 300 1022 420 1060 562 C1082 450 1062 300 1022 188 Z" fill="#c89656"/><path d="M520 70 C600 110 700 130 800 120 C700 150 600 150 510 110 Z" fill="#d8a862"/><path d="M420 420 C400 500 400 560 420 620 C440 540 470 470 520 410 Z" fill="#d8a862"/></g></svg>
<div class="a" style="left:877px;top:1004px;width:1582px;height:3px;background:#191919;"></div>
<div class="a" style="left:877px;top:1007px;width:1582px;height:19px;background:#222;"></div>
<div class="a" style="left:1166px;top:1007px;width:86px;height:19px;background:#2d2d2d;border-radius:3px 3px 0 0"></div>
<div class="a" style="left:877px;top:1026px;width:1582px;height:21px;background:#333;"></div>
<div class="a" style="left:877px;top:1047px;width:1582px;height:1px;background:#1f1f1f;"></div>
<div class="a" style="left:877px;top:1048px;width:1582px;height:330px;background:#2d2d2d;"></div>
<div class="t" style="left:901px;top:1011.8px;font-size:12.5px;color:#c4c4c4;letter-spacing:0.08px">Project</div>
<div class="t" style="left:983px;top:1011.8px;font-size:12.5px;color:#c4c4c4;letter-spacing:0.08px">Audio Mixer</div>
<div class="t" style="left:1091px;top:1011.8px;font-size:12.5px;color:#c4c4c4;letter-spacing:0.08px">Animation</div>
<div class="t" style="left:1189px;top:1011.8px;font-size:12.5px;color:#c4c4c4;letter-spacing:0.08px">Console</div>
<svg style="left:0;top:0" width="1" height="1"><path d="M885 1012.500h4.500l1.500 1.500h6v7.500h-12z" fill="#c4c4c4"/><path d="M968.500 1012v10M972.500 1012v10M976.500 1012v10" stroke="#c4c4c4" stroke-width="1.100"/><path d="M967 1015h3M971 1019h3M975 1014.500h3" stroke="#c4c4c4" stroke-width="2"/><circle cx="1080.500" cy="1017" r="5.500" fill="#c4c4c4"/><path d="M1080.500 1013v4.300h3.500" stroke="#2a2a2a" stroke-width="1.300" fill="none"/><path d="M1174.500 1012h9.500v10h-9.500z" fill="#c4c4c4"/><path d="M1176 1014.500h6.500M1176 1017h6.500M1176 1019.500h6.500" stroke="#2d2d2d" stroke-width="1"/><circle cx="2446" cy="1012.500" r="1.100" fill="#c4c4c4"/><circle cx="2446" cy="1016.500" r="1.100" fill="#c4c4c4"/><circle cx="2446" cy="1020.500" r="1.100" fill="#c4c4c4"/><path d="M921 1034.500h8l-4 4.500z M1105 1034.500h8l-4 4.500z" fill="#c4c4c4"/></svg>
<div class="t" style="left:881px;top:1030.8px;font-size:12.5px;color:#c4c4c4;letter-spacing:0.05px">Clear</div>
<div class="t" style="left:937px;top:1030.8px;font-size:12.5px;color:#c4c4c4;letter-spacing:0.05px">Collapse</div>
<div class="t" style="left:997px;top:1030.8px;font-size:12.5px;color:#c4c4c4;letter-spacing:0.05px">Error Pause</div>
<div class="t" style="left:1070px;top:1030.8px;font-size:12.5px;color:#c4c4c4;letter-spacing:0.05px">Editor</div>
<div class="a" style="left:933px;top:1027px;width:1px;height:19px;background:#262626;"></div>
<div class="a" style="left:992px;top:1027px;width:1px;height:19px;background:#262626;"></div>
<div class="a" style="left:1066px;top:1027px;width:1px;height:19px;background:#262626;"></div>
<div class="a" style="left:1117px;top:1027px;width:1px;height:19px;background:#262626;"></div>
<div class="a" style="left:916.5px;top:1030px;width:1px;height:12px;background:#262626;"></div>
<div class="a" style="left:2050px;top:1029px;width:298px;height:15px;background:#1e1e1e;border-radius:3px;border:1px solid #151515"></div>
<svg style="left:2053px;top:1032px" width="10" height="10"><circle cx="3.600" cy="3.600" r="2.300" fill="none" stroke="#aaa" stroke-width="1.200"/><path d="M5.300 5.300L8.400 8.400" stroke="#aaa" stroke-width="1.400"/></svg>
<div class="a" style="left:2352px;top:1026px;width:38px;height:20px;background:#454545;"></div>
<div class="a" style="left:2391px;top:1026px;width:33px;height:20px;background:#454545;"></div>
<div class="a" style="left:2425px;top:1026px;width:33px;height:20px;background:#454545;"></div>
<div class="a" style="left:2351px;top:1026px;width:1px;height:20px;background:#262626;"></div>
<div class="a" style="left:2390px;top:1026px;width:1px;height:20px;background:#262626;"></div>
<div class="a" style="left:2424px;top:1026px;width:1px;height:20px;background:#262626;"></div>
<svg style="left:0;top:0" width="1" height="1"><circle cx="2363.5" cy="1035.5" r="6.3" fill="#d0d0d0"/><path d="M2365.58 1041.17L2368.92 1042.81L2368.41 1038.65z" fill="#d0d0d0"/><path d="M2362.618 1031.594h1.764l-0.252 5.04h-1.26z" fill="#454545"/><circle cx="2363.5" cy="1038.65" r="0.945" fill="#454545"/><path d="M2402 1029.500l6 12h-12z" fill="#6a6a6a"/><path d="M2401.500 1033.500h1l-0.200 4.500h-0.600z M2401.500 1039h1v1h-1z" fill="#454545"/><circle cx="2436.5" cy="1035.5" r="6.3" fill="#c0c0c0"/><path d="M2435.618 1031.594h1.764l-0.252 5.04h-1.26z" fill="#454545"/><circle cx="2436.5" cy="1038.65" r="0.945" fill="#454545"/></svg>
<div class="t" style="left:2372px;top:1030.8px;font-size:12.5px;color:#c4c4c4;">16</div>
<div class="t" style="left:2412px;top:1030.8px;font-size:12.5px;color:#c4c4c4;">0</div>
<div class="t" style="left:2446px;top:1030.8px;font-size:12.5px;color:#c4c4c4;">0</div>
<div class="a" style="left:877px;top:1048px;width:1569px;height:38px;background:#2b2b2b;"></div>
<div class="t" style="left:917px;top:1052.8px;font-size:12.45px;color:#c4c4c4;letter-spacing:0px">[14:43:25] Origin Cell: Cell 5, 9 (GamingIsLove.ORKFramework.Components.BattleGridCellComponent)</div>
<div class="t" style="left:917px;top:1068.0px;font-size:12.5px;color:#c4c4c4;letter-spacing:0.02px">UnityEngine.Debug:Log (object)</div>
<div class="a" style="left:877px;top:1086px;width:1569px;height:38px;background:#313131;"></div>
<div class="t" style="left:917px;top:1090.8px;font-size:12.45px;color:#c4c4c4;letter-spacing:0.035px">[14:43:25] Target Cell: Cell 4, 9 (GamingIsLove.ORKFramework.Components.BattleGridCellComponent)</div>
<div class="t" style="left:917px;top:1106.0px;font-size:12.5px;color:#c4c4c4;letter-spacing:0.02px">UnityEngine.Debug:Log (object)</div>
<div class="a" style="left:877px;top:1124px;width:1569px;height:38px;background:#2b2b2b;"></div>
<div class="t" style="left:917px;top:1128.8px;font-size:12.45px;color:#c4c4c4;letter-spacing:0.01px">[14:43:25] Grid Distance: 1</div>
<div class="t" style="left:917px;top:1144.0px;font-size:12.5px;color:#c4c4c4;letter-spacing:0.02px">UnityEngine.Debug:Log (object)</div>
<div class="a" style="left:877px;top:1162px;width:1569px;height:38px;background:#313131;"></div>
<div class="t" style="left:917px;top:1166.8px;font-size:12.45px;color:#c4c4c4;letter-spacing:0.11px">[14:43:25] Affected Targets In: 1</div>
<div class="t" style="left:917px;top:1182.0px;font-size:12.5px;color:#c4c4c4;letter-spacing:0.02px">UnityEngine.Debug:Log (object)</div>
<div class="a" style="left:877px;top:1200px;width:1569px;height:38px;background:#2b2b2b;"></div>
<div class="t" style="left:917px;top:1204.8px;font-size:12.45px;color:#c4c4c4;letter-spacing:0.16px">[14:43:25] Affected Target In: Ganymede</div>
<div class="t" style="left:917px;top:1220.0px;font-size:12.5px;color:#c4c4c4;letter-spacing:0.02px">UnityEngine.Debug:Log (object)</div>
<div class="a" style="left:877px;top:1238px;width:1569px;height:40px;background:#313131;"></div>
<div class="t" style="left:917px;top:1242.8px;font-size:12.45px;color:#c4c4c4;letter-spacing:0.105px">[14:43:25] Storing Ganymede - Position: (0.00, 1.00, 0.00), Rotation: (0.00, 270.00, 270.00), Scale: (1.00, 1.00, 1.00)</div>
<div class="t" style="left:917px;top:1258.0px;font-size:12.5px;color:#c4c4c4;letter-spacing:0.02px">UnityEngine.Debug:Log (object)</div>
<svg style="left:0;top:0" width="1" height="1"><circle cx="899.8" cy="1067.3" r="12.9" fill="#c8c8c8"/><path d="M904.06 1078.91L910.89 1082.26L909.86 1073.75z" fill="#c8c8c8"/><path d="M897.9939999999999 1059.302h3.6120000000000005l-0.516 10.32h-2.58z" fill="#2d2d2d"/><circle cx="899.8" cy="1073.75" r="1.935" fill="#2d2d2d"/><circle cx="899.8" cy="1105.3" r="12.9" fill="#c8c8c8"/><path d="M904.06 1116.91L910.89 1120.26L909.86 1111.75z" fill="#c8c8c8"/><path d="M897.9939999999999 1097.302h3.6120000000000005l-0.516 10.32h-2.58z" fill="#2d2d2d"/><circle cx="899.8" cy="1111.75" r="1.935" fill="#2d2d2d"/><circle cx="899.8" cy="1143.3" r="12.9" fill="#c8c8c8"/><path d="M904.06 1154.91L910.89 1158.26L909.86 1149.75z" fill="#c8c8c8"/><path d="M897.9939999999999 1135.302h3.6120000000000005l-0.516 10.32h-2.58z" fill="#2d2d2d"/><circle cx="899.8" cy="1149.75" r="1.935" fill="#2d2d2d"/><circle cx="899.8" cy="1181.3" r="12.9" fill="#c8c8c8"/><path d="M904.06 1192.91L910.89 1196.26L909.86 1187.75z" fill="#c8c8c8"/><path d="M897.9939999999999 1173.302h3.6120000000000005l-0.516 10.32h-2.58z" fill="#2d2d2d"/><circle cx="899.8" cy="1187.75" r="1.935" fill="#2d2d2d"/><circle cx="899.8" cy="1219.3" r="12.9" fill="#c8c8c8"/><path d="M904.06 1230.91L910.89 1234.26L909.86 1225.75z" fill="#c8c8c8"/><path d="M897.9939999999999 1211.302h3.6120000000000005l-0.516 10.32h-2.58z" fill="#2d2d2d"/><circle cx="899.8" cy="1225.75" r="1.935" fill="#2d2d2d"/><circle cx="899.8" cy="1257.3" r="12.9" fill="#c8c8c8"/><path d="M904.06 1268.91L910.89 1272.26L909.86 1263.75z" fill="#c8c8c8"/><path d="M897.9939999999999 1249.302h3.6120000000000005l-0.516 10.32h-2.58z" fill="#2d2d2d"/><circle cx="899.8" cy="1263.75" r="1.935" fill="#2d2d2d"/></svg>
<div class="a" style="left:877px;top:1278px;width:1582px;height:1.2px;background:#1a1a1a;"></div>
<div class="a" style="left:2446px;top:1048px;width:13px;height:230px;background:#2a2a2a;"></div>
<svg style="left:0;top:0" width="1" height="1"><path d="M2448.5 1057.0L2452.5 1053.0L2456.5 1057.0Z" fill="#b0b0b0"/></svg>
<svg style="left:0;top:0" width="1" height="1"><path d="M2448.5 1269.0L2452.5 1273.0L2456.5 1269.0Z" fill="#b0b0b0"/></svg>
<div class="a" style="left:2448px;top:1108px;width:9.5px;height:87px;background:#4f4f4f;border-radius:4.700px"></div>
</div></body></html>
